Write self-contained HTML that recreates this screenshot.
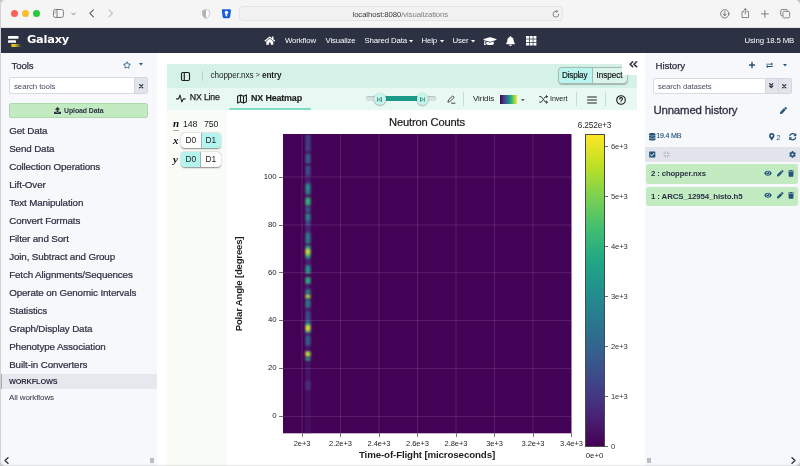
<!DOCTYPE html>
<html lang="en">
<head>
<meta charset="utf-8">
<title>Galaxy</title>
<style>
*{box-sizing:border-box;margin:0;padding:0}
html,body{width:800px;height:466px;overflow:hidden;background:#fff}
body{will-change:transform;font-family:"Liberation Sans",sans-serif;color:#2c3143;position:relative;-webkit-font-smoothing:antialiased}
.abs{position:absolute}
.t{position:absolute;white-space:nowrap;line-height:1}
svg{position:absolute;overflow:visible}
/* browser chrome */
#chrome{left:0;top:0;width:800px;height:28px;background:#f5f5f5;border-bottom:1px solid #e2e2e2}
.dot{width:7.2px;height:7.2px;border-radius:50%;top:9.8px}
#url{left:238.6px;top:6.2px;width:324.4px;height:14.5px;border-radius:4px;background:#f2f2f2;border:1px solid #e3e3e3}
/* navbar */
#nav{left:0;top:28px;width:800px;height:25.4px;background:#2c3143}
#nav .t{color:#fff;font-size:8.6px;top:8.5px}
/* panels */
#left{left:0;top:53px;width:157px;height:413px;background:#f7f8fb}
#right{left:644.5px;top:53px;width:155.5px;height:413px;background:#f7f8fb}
.tool{margin-top:-.8px;left:9.2px;font-size:9.8px;letter-spacing:-.13px;color:#2c3143;-webkit-text-stroke:.22px #2c3143}
.inp{background:#fff;border:1px solid #d6dae3;border-radius:2px}
.yl{font-size:7.8px;color:#262626;letter-spacing:-.12px}
.xl{font-size:7.5px;color:#262626;transform:translateX(-50%);letter-spacing:-.05px}
.ibtn{background:#e1e4ea;border:1px solid #d3d7e0}
</style>
</head>
<body>
<!-- ===== browser chrome ===== -->
<div id="chrome" class="abs"></div>
<div class="abs dot" style="left:10.9px;background:#fe5f57"></div>
<div class="abs dot" style="left:21.7px;background:#febc2e"></div>
<div class="abs dot" style="left:32.6px;background:#28c840"></div>
<svg style="left:53px;top:8.6px" width="11.4" height="9.4" viewBox="0 0 12 10" fill="none" stroke="#7a7a7a" stroke-width="1.05"><rect x=".5" y=".5" width="10.5" height="8.5" rx="2"/><path d="M4.2 .5v8.5"/><path d="M1.8 2.6h1.2M1.8 4.2h1.2" stroke-width=".7"/></svg>
<svg style="left:70.5px;top:12px" width="5" height="4" viewBox="0 0 5 4" fill="none" stroke="#7a7a7a" stroke-width="1"><path d="M.5 .8l2 2 2-2"/></svg>
<svg style="left:88.6px;top:8.9px" width="5.3" height="8.8" viewBox="0 0 6 10" fill="none" stroke="#5a5a5a" stroke-width="1.25" stroke-linecap="round" stroke-linejoin="round"><path d="M5 1L1 5l4 4"/></svg>
<svg style="left:108.2px;top:8.9px" width="5.3" height="8.8" viewBox="0 0 6 10" fill="none" stroke="#bdbdbd" stroke-width="1.25" stroke-linecap="round" stroke-linejoin="round"><path d="M1 1l4 4-4 4"/></svg>
<!-- shield -->
<svg style="left:202px;top:8.8px" width="8" height="10" viewBox="0 0 8 10"><path d="M4 .4C2.800 1.200 1.700 1.500.5 1.600v3.200C.5 7 1.900 8.700 4 9.600 6.100 8.700 7.500 7 7.500 4.800V1.600C6.300 1.500 5.200 1.200 4 .4z" fill="#fcfcfc" stroke="#b4b4b4" stroke-width=".7"/><path d="M4 .4C2.800 1.200 1.700 1.500.5 1.600v3.200C.5 7 1.900 8.700 4 9.600z" fill="#b2b2b2"/></svg>
<!-- bitwarden -->
<svg style="left:220.8px;top:8.8px" width="10.8" height="9.5" viewBox="0 0 10 10"><path d="M1 .2h8c.5 0 .85.4.8.9l-.7 6.400c-.1 1.300-.9 2.200-2.100 2.200H3c-1.200 0-2-.9-2.100-2.200L.2 1.100C.15.600.5.200 1 .2z" fill="#175ddc"/><circle cx="5" cy="3.6" r="1.8" fill="#fff"/><path d="M4.200 4.300h1.600l.2 3.300H4z" fill="#fff"/></svg>
<div id="url" class="abs"></div>
<div class="t" style="left:352.500px;top:10.7px;font-size:7.77px;color:#3c3c3c;letter-spacing:-0.099px">localhost:8080<span style="color:#808080">/visualizations</span></div>
<svg style="left:552px;top:9.500px" width="8" height="8" viewBox="0 0 8 8" fill="none" stroke="#6b6b6b" stroke-width=".8" stroke-linecap="round"><path d="M6.800 4.200A2.900 2.900 0 1 1 4 1.300h1.400"/><path d="M4.500 .2l1.100 1.100-1.100 1.100"/></svg>
<!-- right icons -->
<svg style="left:719.7px;top:8.6px" width="9.6" height="9.6" viewBox="0 0 10 10" fill="none" stroke="#5f5f5f" stroke-width=".85" stroke-linecap="round" stroke-linejoin="round"><circle cx="5" cy="5" r="4.300"/><path d="M5 2.600v4.400M3.200 5.300L5 7.100l1.800-1.800"/></svg>
<svg style="left:740.6px;top:7.6px" width="8.6" height="10.2" viewBox="0 0 9 11" fill="none" stroke="#5f5f5f" stroke-width=".8" stroke-linecap="round" stroke-linejoin="round"><path d="M2.800 4H1v6.300h7V4H6.200"/><path d="M4.500 6.500V.8M2.800 2.400L4.500.7l1.700 1.700"/></svg>
<svg style="left:760.8px;top:9.5px" width="7.8" height="7.8" viewBox="0 0 9 9" fill="none" stroke="#5f5f5f" stroke-width=".9" stroke-linecap="round"><path d="M4.500 .5v8M.5 4.500h8"/></svg>
<svg style="left:780.2px;top:8.8px" width="10.4" height="9.2" viewBox="0 0 11 10" fill="none" stroke="#5f5f5f" stroke-width=".8"><rect x="3" y="2.600" width="7.300" height="7" rx="1.500" fill="#f5f5f5"/><path d="M2.700 7.400h-.6A1.500 1.500 0 0 1 .6 5.900V2A1.500 1.500 0 0 1 2.100.500h4.400A1.500 1.500 0 0 1 8 2v.4"/></svg>

<!-- ===== navbar ===== -->
<div id="nav" class="abs">
  <svg style="left:7.8px;top:7.7px" width="14" height="12" viewBox="0 0 14 12"><defs><linearGradient id="lg" x1="0" x2="1" y1="0" y2="0"><stop offset="0" stop-color="#e8cf1c"/><stop offset=".35" stop-color="#d9c11f"/><stop offset="1" stop-color="#d9c11f" stop-opacity="0"/></linearGradient></defs><rect x="0" y="0" width="10.4" height="2.8" rx=".4" fill="#fff"/><rect x="0" y="4.3" width="8" height="2.5" rx=".4" fill="#fff"/><rect x="3.3" y="7.9" width="9.9" height="3.2" rx=".8" fill="url(#lg)"/></svg>
  <div class="t" style="left:27px;top:6.3px;font-family:'DejaVu Sans','Liberation Sans',sans-serif;font-weight:bold;font-size:11.36px;letter-spacing:-0.21px">Galaxy</div>
  <svg style="left:264.3px;top:8px" width="11.6" height="9.4" viewBox="0 0 576 512" fill="#fff"><path d="M280.400 148.300L96 300.100V464a16 16 0 0 0 16 16l112.100-.3a16 16 0 0 0 15.900-16V368a16 16 0 0 1 16-16h64a16 16 0 0 1 16 16v95.600a16 16 0 0 0 16 16.100L464 480a16 16 0 0 0 16-16V300L295.700 148.300a12.200 12.200 0 0 0-15.300 0zM571.600 251.500L488 182.600V44.100a12 12 0 0 0-12-12h-56a12 12 0 0 0-12 12v72.600L318.500 43a48 48 0 0 0-61 0L4.300 251.500a12 12 0 0 0-1.600 16.900l25.500 31a12 12 0 0 0 16.900 1.600l235.200-193.700a12.200 12.200 0 0 1 15.300 0L530.900 301a12 12 0 0 0 16.900-1.600l25.500-31a12 12 0 0 0-1.700-16.900z"/></svg>
  <div class="t" style="left:285px;font-size:7.8px;letter-spacing:-0.115px">Workflow</div>
  <div class="t" style="left:325.500px;font-size:7.8px;letter-spacing:-0.115px">Visualize</div>
  <div class="t" style="left:364.500px;font-size:7.8px;letter-spacing:-0.115px">Shared Data</div>
  <svg style="left:409.0px;top:11.7px" width="4.2" height="2.500" viewBox="0 0 5 3" fill="#fff"><path d="M0 0h5L2.500 3z"/></svg>
  <div class="t" style="left:421.500px;font-size:7.8px;letter-spacing:-0.115px">Help</div>
  <svg style="left:440.0px;top:11.7px" width="4.2" height="2.500" viewBox="0 0 5 3" fill="#fff"><path d="M0 0h5L2.500 3z"/></svg>
  <div class="t" style="left:452.500px;font-size:7.8px;letter-spacing:-0.115px">User</div>
  <svg style="left:471.0px;top:11.7px" width="4.2" height="2.500" viewBox="0 0 5 3" fill="#fff"><path d="M0 0h5L2.500 3z"/></svg>
  <!-- graduation cap -->
  <svg style="left:483px;top:7.6px" width="14" height="10.4" viewBox="0 0 640 512" fill="#fff"><path d="M622.300 153.200L343.400 67.500c-15.200-4.700-31.600-4.700-46.800 0L17.700 153.200c-23.500 7.200-23.500 38.400 0 45.600l48.600 14.900c-10.700 13.200-17.200 29.300-17.900 46.900C38.800 266.200 32 276.100 32 288c0 10.800 5.700 19.900 13.900 25.700L20.300 428.500c-2.200 10 5.400 19.500 15.600 19.500h56.100c10.200 0 17.800-9.500 15.600-19.500L82.100 313.700C90.300 307.900 96 298.800 96 288c0-11.600-6.500-21.300-15.700-27 .8-15 8.400-28.300 20.700-36.700L296.600 284.500c9.100 2.800 26.400 6.300 46.800 0l278.900-85.700c23.600-7.200 23.600-38.400 0-45.600zM352.800 315.100c-28.500 8.800-52.800 3.900-65.600 0l-145-44.500L128 384c0 35.400 86 64 192 64s192-28.600 192-64l-14.200-113.500-145 44.600z"/></svg>
  <!-- bell -->
  <svg style="left:505.500px;top:8px" width="9" height="10" viewBox="0 0 448 512" fill="#fff"><path d="M224 512c35.300 0 64-28.700 64-64H160c0 35.300 28.700 64 64 64zm215.400-149.700c-19.300-20.800-55.500-52-55.500-154.300 0-77.700-54.500-139.900-127.900-155.200V32c0-17.700-14.300-32-32-32s-32 14.300-32 32v20.800C118.600 68.100 64.100 130.300 64.100 208c0 102.300-36.200 133.500-55.500 154.300-6 6.500-8.700 14.200-8.600 21.700.1 16.400 13 32 32.100 32h383.800c19.100 0 32-15.600 32.100-32 .1-7.500-2.600-15.300-8.600-21.700z"/></svg>
  <!-- grid -->
  <svg style="left:526px;top:8px" width="10.500" height="9.500" viewBox="0 0 10.500 9.500" fill="#fff"><rect x="0" y="0" width="3" height="2.700"/><rect x="3.700" y="0" width="3" height="2.700"/><rect x="7.400" y="0" width="3" height="2.700"/><rect x="0" y="3.400" width="3" height="2.700"/><rect x="3.700" y="3.400" width="3" height="2.700"/><rect x="7.400" y="3.400" width="3" height="2.700"/><rect x="0" y="6.800" width="3" height="2.700"/><rect x="3.700" y="6.800" width="3" height="2.700"/><rect x="7.400" y="6.800" width="3" height="2.700"/></svg>
  <div class="t" style="left:744.500px;font-size:7.8px;letter-spacing:-0.115px">Using 18.5 MB</div>
</div>

<!-- ===== left panel ===== -->
<div id="left" class="abs">
  <div class="t" style="left:11.6px;top:7.8px;font-size:9.71px;font-weight:normal;-webkit-text-stroke:.25px #2c3143;letter-spacing:-0.132px">Tools</div>
  <!-- star -->
  <svg style="left:123px;top:7.6px" width="8" height="8" viewBox="0 0 576 512" fill="#25537b"><path d="M528.100 171.500L382 150.200 316.700 17.800c-11.700-23.600-45.600-23.900-57.400 0L194 150.200 47.900 171.500c-26.200 3.800-36.700 36.100-17.700 54.600l105.700 103-25 145.500c-4.500 26.300 23.200 46 46.400 33.700L288 439.600l130.700 68.700c23.200 12.200 50.900-7.400 46.400-33.700l-25-145.500 105.700-103c19-18.500 8.500-50.800-17.700-54.600zM388.600 312.300l23.700 138.400L288 385.400l-124.300 65.300 23.700-138.400-100.600-98 139-20.200 62.200-126 62.200 126 139 20.200-100.600 98z"/></svg>
  <svg style="left:139.4px;top:10.4px" width="4" height="2.600" viewBox="0 0 5 3" fill="#25537b"><path d="M0 0h5L2.500 3z"/></svg>
  <div class="abs inp" style="left:9px;top:24.4px;width:126px;height:17px;border-radius:2px 0 0 2px"></div>
  <div class="t" style="left:14px;top:29.5px;font-size:7.92px;color:#4a5066;letter-spacing:-0.104px">search tools</div>
  <div class="abs ibtn" style="left:134px;top:24.4px;width:14px;height:17px;border-radius:0 2px 2px 0"></div>
  <svg style="left:138.9px;top:30.7px" width="4.4" height="4.4" viewBox="0 0 5 5" stroke="#2c3143" stroke-width="1.4" stroke-linecap="round"><path d="M.7 .7l3.600 3.600M4.300 .7L.7 4.300"/></svg>
  <div class="abs" style="left:9px;top:50px;width:139px;height:15px;background:#c2ebc2;border:1px solid #b0d8b0;border-radius:2px"></div>
  <svg style="left:54px;top:54px" width="7" height="7" viewBox="0 0 512 512" fill="#2c3143"><path d="M296 384h-80c-13.300 0-24-10.700-24-24V192h-87.700c-17.800 0-26.700-21.500-14.100-34.100L242.300 5.700c7.500-7.500 19.800-7.500 27.300 0l152.200 152.200c12.600 12.600 3.700 34.100-14.100 34.100H320v168c0 13.300-10.700 24-24 24zm216-8v112c0 13.300-10.700 24-24 24H24c-13.300 0-24-10.700-24-24V376c0-13.300 10.700-24 24-24h136v8c0 30.900 25.100 56 56 56h80c30.900 0 56-25.100 56-56v-8h136c13.300 0 24 10.700 24 24z"/></svg>
  <div class="t" style="left:64px;top:55px;font-size:6.96px;font-weight:bold;letter-spacing:-0.107px">Upload Data</div>
  <div class="t tool" style="top:73.500px">Get Data</div>
  <div class="t tool" style="top:91.500px">Send Data</div>
  <div class="t tool" style="top:109.500px">Collection Operations</div>
  <div class="t tool" style="top:127.500px">Lift-Over</div>
  <div class="t tool" style="top:145.500px">Text Manipulation</div>
  <div class="t tool" style="top:163.500px">Convert Formats</div>
  <div class="t tool" style="top:181.500px">Filter and Sort</div>
  <div class="t tool" style="top:199.500px">Join, Subtract and Group</div>
  <div class="t tool" style="top:217.500px">Fetch Alignments/Sequences</div>
  <div class="t tool" style="top:235.500px">Operate on Genomic Intervals</div>
  <div class="t tool" style="top:253.500px">Statistics</div>
  <div class="t tool" style="top:271.500px">Graph/Display Data</div>
  <div class="t tool" style="top:289.500px">Phenotype Association</div>
  <div class="t tool" style="top:307.500px">Built-in Converters</div>
  <div class="abs" style="left:0;top:321px;width:157px;height:15px;background:#e6e8ee;border-left:2.4px solid #a4a8b8"></div>
  <div class="t" style="left:9px;top:325px;font-size:7.38px;font-weight:bold;letter-spacing:-0.162px">WORKFLOWS</div>
  <div class="t" style="left:9px;top:340.500px;font-size:8.03px;letter-spacing:-0.104px">All workflows</div>
  <svg style="left:4px;top:404px" width="5" height="7" viewBox="0 0 5 7" fill="none" stroke="#2c3143" stroke-width="1.400" stroke-linecap="round" stroke-linejoin="round"><path d="M4 .8L1 3.500 4 6.200"/></svg>
  <div class="abs" style="left:149.5px;top:404.5px;width:4px;height:5.4px;background:#bcbec4"></div>
</div>


<!-- ===== center ===== -->
<div id="center" class="abs" style="left:157px;top:53px;width:488px;height:413px;background:#fff"></div>
<div class="abs" style="left:167px;top:63.500px;width:470px;height:24.500px;background:#d5f2e9"></div>
<div class="abs" style="left:167px;top:88px;width:470px;height:21.5px;background:#e8f8f3"></div>
<div class="abs" style="left:167px;top:109.5px;width:60px;height:356.5px;background:#fafcf7"></div>
<!-- white notch + collapse icon -->
<div class="abs" style="left:621.5px;top:60px;width:15.5px;height:15px;background:#fff;border-radius:0 0 0 3px"></div>
<svg style="left:628.5px;top:61.3px" width="8.6" height="6.4" viewBox="0 0 9 7" fill="none" stroke="#2c3143" stroke-width="1.7" stroke-linecap="round" stroke-linejoin="round"><path d="M3.800 .8L1 3.500l2.800 2.700M8 .8L5.200 3.500 8 6.200"/></svg>
<!-- header -->
<svg style="left:181px;top:71.5px" width="9" height="9" viewBox="0 0 9 9" fill="none" stroke="#1e1e1e" stroke-width="1.15"><rect x=".5" y=".5" width="8" height="8" rx="1.200"/><path d="M3.300 .5v8"/></svg>
<div class="abs" style="left:201.500px;top:71px;width:1px;height:9.500px;background:#b9d6cd"></div>
<div class="t" style="left:210.500px;top:71.500px;font-size:8.200px;color:#1e1e1e;letter-spacing:-.1px">chopper.nxs <span style="font-size:7px;position:relative;top:-.5px">&gt;</span> <b>entry</b></div>
<!-- display / inspect -->
<div class="abs" style="left:557.8px;top:67.2px;width:70.4px;height:17px;border:1px solid #a9b9b4;border-radius:4.5px;background:#daf3ec;overflow:hidden;box-shadow:0 .5px 1px rgba(0,0,0,.25)"><div class="abs" style="left:0;top:0;width:34.2px;height:15px;background:#b8f5ee;border-right:1px solid #a8b8b3"></div></div>
<div class="t" style="left:562px;top:72.2px;font-size:8.15px;color:#111;letter-spacing:-.19px;-webkit-text-stroke:.15px #111">Display</div>
<div class="t" style="left:596.500px;top:72.2px;font-size:8.15px;color:#111;letter-spacing:-.045px;-webkit-text-stroke:.15px #111">Inspect</div>
<!-- white notch again over inspect corner -->
<div class="abs" style="left:621.5px;top:60px;width:15.5px;height:15px;background:#fff;border-radius:0 0 0 3px"></div>
<svg style="left:628.5px;top:61.3px" width="8.6" height="6.4" viewBox="0 0 9 7" fill="none" stroke="#2c3143" stroke-width="1.7" stroke-linecap="round" stroke-linejoin="round"><path d="M3.800 .8L1 3.500l2.800 2.700M8 .8L5.200 3.500 8 6.200"/></svg>
<!-- tabs -->
<svg style="left:175.8px;top:93.8px" width="9.6" height="9" viewBox="0 0 10 9" fill="none" stroke="#1e1e1e" stroke-width="1.1" stroke-linecap="round" stroke-linejoin="round"><path d="M.6 4.900h2.100L4.100 .9l2 7.200 1.500-3.200h1.900"/></svg>
<div class="t" style="left:189.8px;top:93.4px;font-size:8.8px;color:#1e1e1e;letter-spacing:-.19px;-webkit-text-stroke:.25px #1e1e1e">NX Line</div>
<svg style="left:237px;top:93.5px" width="10" height="10" viewBox="0 0 10 10" fill="none" stroke="#1e1e1e" stroke-width="1.1" stroke-linejoin="round"><path d="M.6 2.200l2.900-1.300 3 1.300 2.900-1.300v6.900L6.500 9.100l-3-1.300L.6 9.100zM3.500 .9v6.900M6.500 2.200v6.900"/></svg>
<div class="t" style="left:251px;top:93.500px;font-size:8.92px;font-weight:bold;color:#1e1e1e;letter-spacing:-0.153px;-webkit-text-stroke:.15px #1e1e1e">NX Heatmap</div>
<div class="abs" style="left:229px;top:107.500px;width:82px;height:2.200px;background:#7fdcc2;border-radius:1px"></div>
<!-- slider -->
<div class="abs" style="left:366px;top:96.2px;width:70px;height:5px;border-radius:3px;background:#d9e2de;box-shadow:inset 0 .5px 1px rgba(0,0,0,.25)"></div>
<div class="abs" style="left:380px;top:96.2px;width:43px;height:5px;background:#1b9a8a"></div>
<div class="abs" style="left:374px;top:93px;width:11.500px;height:11.500px;border-radius:50%;background:#c4f6ee;box-shadow:0 .5px 1.500px rgba(0,0,0,.45)"></div>
<div class="abs" style="left:416.500px;top:93px;width:11.500px;height:11.500px;border-radius:50%;background:#c4f6ee;box-shadow:0 .5px 1.500px rgba(0,0,0,.45)"></div>
<svg style="left:377px;top:96.500px" width="5" height="5" viewBox="0 0 5 5" fill="none" stroke="#20665c" stroke-width=".7" stroke-linejoin="round"><path d="M.6 .3v4.400"/><path d="M4.500 .5v4L1.700 2.500z"/></svg>
<svg style="left:420px;top:96.500px" width="5" height="5" viewBox="0 0 5 5" fill="none" stroke="#20665c" stroke-width=".7" stroke-linejoin="round"><path d="M4.400 .3v4.400"/><path d="M.5 .5v4L3.300 2.500z"/></svg>
<!-- pencil -->
<svg style="left:446.500px;top:94.500px" width="9" height="9" viewBox="0 0 9 9" fill="none" stroke="#1e1e1e" stroke-width=".8" stroke-linecap="round" stroke-linejoin="round"><path d="M1 6.800l.5-1.900L5.700 .9l1.500 1.500-4.300 4.100z"/><path d="M4.500 8.200H8"/></svg>
<div class="abs" style="left:463px;top:92px;width:1px;height:14px;background:#c5ddd6"></div>
<div class="t" style="left:473px;top:94.500px;font-size:8.02px;color:#1e1e1e;letter-spacing:-0.09px">Viridis</div>
<div class="abs" style="left:500px;top:95px;width:17px;height:9px;background:linear-gradient(90deg,#440154,#414487 25%,#2a788e 45%,#22a884 62%,#7ad151 80%,#fde725)"></div>
<svg style="left:520.7px;top:98.6px" width="3.6" height="2.2" viewBox="0 0 5 3" fill="#555"><path d="M0 0h5L2.500 3z"/></svg>
<!-- invert -->
<svg style="left:539px;top:95px" width="9" height="9" viewBox="0 0 9 9" fill="none" stroke="#1e1e1e" stroke-width=".9" stroke-linecap="round" stroke-linejoin="round"><path d="M.7 1.600h1.500l4.300 5.600h1.800M.7 7.200h1.500l1.300-1.700M5.200 3.200l1.300-1.600h1.800M7.200 .5l1.200 1.100-1.200 1.100M7.200 6.100l1.200 1.100-1.200 1.100"/></svg>
<div class="t" style="left:550px;top:95.500px;font-size:7.17px;color:#1e1e1e;letter-spacing:-0.087px">Invert</div>
<div class="abs" style="left:576px;top:92px;width:1px;height:14px;background:#c5ddd6"></div>
<svg style="left:587px;top:95.500px" width="10" height="8" viewBox="0 0 10 8" fill="none" stroke="#1e1e1e" stroke-width="1" stroke-linecap="round"><path d="M.6 1h8.800M.6 4h8.800M.6 7h8.800"/></svg>
<div class="abs" style="left:605px;top:92px;width:1px;height:14px;background:#c5ddd6"></div>
<svg style="left:615.500px;top:94.500px" width="10" height="10" viewBox="0 0 10 10" fill="none" stroke="#151515" stroke-width="1.1" stroke-linecap="round"><circle cx="5" cy="5" r="4.3"/><path d="M3.700 3.900a1.350 1.350 0 1 1 2 1.200c-.5.300-.7.500-.7 1"/><circle cx="5" cy="7.400" r=".4" fill="#1e1e1e" stroke="none"/></svg>
<!-- dimension mapper -->
<div class="t" style="left:173px;top:117.500px;font-family:'Liberation Serif',serif;font-style:italic;font-weight:bold;font-size:11px;color:#111">n</div>
<div class="abs" style="left:172.5px;top:129.8px;width:6.2px;height:.8px;background:#a8a8a8"></div>
<div class="t" style="left:183px;top:119.500px;font-size:8.8px;color:#1e1e1e;letter-spacing:-0.14px">148</div>
<div class="t" style="left:204px;top:119.500px;font-size:8.8px;color:#1e1e1e;letter-spacing:-0.14px">750</div>
<div class="t" style="left:173px;top:135.2px;font-family:'Liberation Serif',serif;font-style:italic;font-weight:bold;font-size:11px;color:#111">x</div>
<div class="abs" style="left:181px;top:132.500px;width:39.500px;height:15.500px;border-radius:4px;background:#fdfefd;box-shadow:0 .5px 1.500px rgba(0,0,0,.45);overflow:hidden"><div class="abs" style="left:20px;top:0;width:20px;height:16px;background:#b3f4ee;border-left:1px solid #9fb5af"></div></div>
<div class="t" style="left:185.500px;top:136px;font-size:8.4px;color:#1e1e1e;letter-spacing:-0.15px">D0</div>
<div class="t" style="left:205.500px;top:136px;font-size:8.4px;color:#1e1e1e;letter-spacing:-0.15px">D1</div>
<div class="t" style="left:173px;top:153.7px;font-family:'Liberation Serif',serif;font-style:italic;font-weight:bold;font-size:11px;color:#111">y</div>
<div class="abs" style="left:181px;top:151.500px;width:39.500px;height:15.500px;border-radius:4px;background:#fdfefd;box-shadow:0 .5px 1.500px rgba(0,0,0,.45);overflow:hidden"><div class="abs" style="left:0;top:0;width:20px;height:16px;background:#b3f4ee;border-right:1px solid #9fb5af"></div></div>
<div class="t" style="left:185.500px;top:155px;font-size:8.4px;color:#1e1e1e;letter-spacing:-0.15px">D0</div>
<div class="t" style="left:205.500px;top:155px;font-size:8.4px;color:#1e1e1e;letter-spacing:-0.15px">D1</div>
<!-- plot -->
<div class="t" style="left:427px;top:116.7px;font-size:11.18px;color:#151515;transform:translateX(-50%);letter-spacing:-0.163px;-webkit-text-stroke:.18px #151515">Neutron Counts</div>
<svg style="left:283px;top:134px" width="288.500" height="299.300" viewBox="0 0 288.500 299.300">
<defs><clipPath id="cp"><rect width="288.5" height="299.3"/></clipPath><filter id="bl" x="-50%" y="-2%" width="200%" height="104%"><feGaussianBlur stdDeviation="0.8 1.0"/></filter></defs>
<rect width="288.500" height="299.300" fill="#440256"/>
<g clip-path="url(#cp)"><g filter="url(#bl)">
<rect x="22" y="0" width="6.2" height="299.3" fill="#46075b" />
<rect x="22.7" y="0.0" width="2.5" height="1.15" fill="#450d5f"/>
<rect x="25.1" y="0.0" width="2.3" height="1.15" fill="#450c5e"/>
<rect x="22.7" y="1.0" width="2.5" height="1.15" fill="#414386"/>
<rect x="25.1" y="1.0" width="2.3" height="1.15" fill="#423f84"/>
<rect x="22.7" y="2.0" width="2.5" height="1.15" fill="#414587"/>
<rect x="25.1" y="2.0" width="2.3" height="1.15" fill="#433a81"/>
<rect x="22.7" y="3.0" width="2.5" height="1.15" fill="#423f84"/>
<rect x="25.1" y="3.0" width="2.3" height="1.15" fill="#424185"/>
<rect x="22.7" y="4.0" width="2.5" height="1.15" fill="#424286"/>
<rect x="25.1" y="4.0" width="2.3" height="1.15" fill="#433b82"/>
<rect x="22.7" y="5.0" width="2.5" height="1.15" fill="#3f4888"/>
<rect x="25.1" y="5.0" width="2.3" height="1.15" fill="#423d83"/>
<rect x="22.7" y="6.0" width="2.5" height="1.15" fill="#404788"/>
<rect x="25.1" y="6.0" width="2.3" height="1.15" fill="#423d83"/>
<rect x="22.7" y="7.0" width="2.5" height="1.15" fill="#404587"/>
<rect x="25.1" y="7.0" width="2.3" height="1.15" fill="#433a82"/>
<rect x="22.7" y="8.0" width="2.5" height="1.15" fill="#404587"/>
<rect x="25.1" y="8.0" width="2.3" height="1.15" fill="#424185"/>
<rect x="22.7" y="9.0" width="2.5" height="1.15" fill="#414487"/>
<rect x="25.1" y="9.0" width="2.3" height="1.15" fill="#424085"/>
<rect x="22.7" y="10.0" width="2.5" height="1.15" fill="#404587"/>
<rect x="25.1" y="10.0" width="2.3" height="1.15" fill="#433a81"/>
<rect x="22.7" y="11.0" width="2.5" height="1.15" fill="#404687"/>
<rect x="25.1" y="11.0" width="2.3" height="1.15" fill="#423e84"/>
<rect x="22.7" y="12.0" width="2.5" height="1.15" fill="#414286"/>
<rect x="25.1" y="12.0" width="2.3" height="1.15" fill="#433981"/>
<rect x="22.7" y="13.0" width="2.5" height="1.15" fill="#404788"/>
<rect x="25.1" y="13.0" width="2.3" height="1.15" fill="#423d83"/>
<rect x="22.7" y="14.0" width="2.5" height="1.15" fill="#404687"/>
<rect x="25.1" y="14.0" width="2.3" height="1.15" fill="#424185"/>
<rect x="22.7" y="15.0" width="2.5" height="1.15" fill="#404687"/>
<rect x="25.1" y="15.0" width="2.3" height="1.15" fill="#424186"/>
<rect x="22.7" y="16.0" width="2.5" height="1.15" fill="#414386"/>
<rect x="25.1" y="16.0" width="2.3" height="1.15" fill="#424085"/>
<rect x="22.7" y="17.0" width="2.5" height="1.15" fill="#450d5f"/>
<rect x="25.1" y="17.0" width="2.3" height="1.15" fill="#450d5f"/>
<rect x="22.7" y="18.0" width="2.5" height="1.15" fill="#450e60"/>
<rect x="25.1" y="18.0" width="2.3" height="1.15" fill="#450b5e"/>
<rect x="22.7" y="19.0" width="2.5" height="1.15" fill="#450d5f"/>
<rect x="25.1" y="19.0" width="2.3" height="1.15" fill="#450c5e"/>
<rect x="22.7" y="20.0" width="2.5" height="1.15" fill="#33658d"/>
<rect x="25.1" y="20.0" width="2.3" height="1.15" fill="#39568b"/>
<rect x="22.7" y="21.0" width="2.5" height="1.15" fill="#34618d"/>
<rect x="25.1" y="21.0" width="2.3" height="1.15" fill="#3a558b"/>
<rect x="22.7" y="22.0" width="2.5" height="1.15" fill="#355f8d"/>
<rect x="25.1" y="22.0" width="2.3" height="1.15" fill="#39568b"/>
<rect x="22.7" y="23.0" width="2.5" height="1.15" fill="#365d8d"/>
<rect x="25.1" y="23.0" width="2.3" height="1.15" fill="#38588b"/>
<rect x="22.7" y="24.0" width="2.5" height="1.15" fill="#35608d"/>
<rect x="25.1" y="24.0" width="2.3" height="1.15" fill="#375c8c"/>
<rect x="22.7" y="25.0" width="2.5" height="1.15" fill="#34618d"/>
<rect x="25.1" y="25.0" width="2.3" height="1.15" fill="#365c8c"/>
<rect x="22.7" y="26.0" width="2.5" height="1.15" fill="#33638d"/>
<rect x="25.1" y="26.0" width="2.3" height="1.15" fill="#365d8c"/>
<rect x="22.7" y="27.0" width="2.5" height="1.15" fill="#34618d"/>
<rect x="25.1" y="27.0" width="2.3" height="1.15" fill="#3a538a"/>
<rect x="22.7" y="28.0" width="2.5" height="1.15" fill="#33638d"/>
<rect x="25.1" y="28.0" width="2.3" height="1.15" fill="#365c8c"/>
<rect x="22.7" y="29.0" width="2.5" height="1.15" fill="#450e60"/>
<rect x="25.1" y="29.0" width="2.3" height="1.15" fill="#450c5f"/>
<rect x="22.7" y="30.0" width="2.5" height="1.15" fill="#450e60"/>
<rect x="25.1" y="30.0" width="2.3" height="1.15" fill="#450c5e"/>
<rect x="22.7" y="31.0" width="2.5" height="1.15" fill="#450e60"/>
<rect x="25.1" y="31.0" width="2.3" height="1.15" fill="#450c5f"/>
<rect x="22.7" y="32.0" width="2.5" height="1.15" fill="#3c4f89"/>
<rect x="25.1" y="32.0" width="2.3" height="1.15" fill="#404788"/>
<rect x="22.7" y="33.0" width="2.5" height="1.15" fill="#39558b"/>
<rect x="25.1" y="33.0" width="2.3" height="1.15" fill="#3c508a"/>
<rect x="22.7" y="34.0" width="2.5" height="1.15" fill="#3d4d89"/>
<rect x="25.1" y="34.0" width="2.3" height="1.15" fill="#3d4e89"/>
<rect x="22.7" y="35.0" width="2.5" height="1.15" fill="#3b518a"/>
<rect x="25.1" y="35.0" width="2.3" height="1.15" fill="#404788"/>
<rect x="22.7" y="36.0" width="2.5" height="1.15" fill="#3c4f8a"/>
<rect x="25.1" y="36.0" width="2.3" height="1.15" fill="#3d4d89"/>
<rect x="22.7" y="37.0" width="2.5" height="1.15" fill="#39568b"/>
<rect x="25.1" y="37.0" width="2.3" height="1.15" fill="#404688"/>
<rect x="22.7" y="38.0" width="2.5" height="1.15" fill="#3a538a"/>
<rect x="25.1" y="38.0" width="2.3" height="1.15" fill="#404688"/>
<rect x="22.7" y="39.0" width="2.5" height="1.15" fill="#3a548b"/>
<rect x="25.1" y="39.0" width="2.3" height="1.15" fill="#3f4988"/>
<rect x="22.7" y="40.0" width="2.5" height="1.15" fill="#39568b"/>
<rect x="25.1" y="40.0" width="2.3" height="1.15" fill="#3c4f8a"/>
<rect x="22.7" y="41.0" width="2.5" height="1.15" fill="#482475"/>
<rect x="25.1" y="41.0" width="2.3" height="1.15" fill="#482374"/>
<rect x="22.7" y="42.0" width="2.5" height="1.15" fill="#482374"/>
<rect x="25.1" y="42.0" width="2.3" height="1.15" fill="#471e70"/>
<rect x="22.7" y="43.0" width="2.5" height="1.15" fill="#482575"/>
<rect x="25.1" y="43.0" width="2.3" height="1.15" fill="#471e6f"/>
<rect x="22.7" y="44.0" width="2.5" height="1.15" fill="#482273"/>
<rect x="25.1" y="44.0" width="2.3" height="1.15" fill="#482071"/>
<rect x="22.7" y="45.0" width="2.5" height="1.15" fill="#482575"/>
<rect x="25.1" y="45.0" width="2.3" height="1.15" fill="#471f70"/>
<rect x="22.7" y="46.0" width="2.5" height="1.15" fill="#482173"/>
<rect x="25.1" y="46.0" width="2.3" height="1.15" fill="#482273"/>
<rect x="22.7" y="47.0" width="2.5" height="1.15" fill="#482374"/>
<rect x="25.1" y="47.0" width="2.3" height="1.15" fill="#482374"/>
<rect x="22.7" y="48.0" width="2.5" height="1.15" fill="#472676"/>
<rect x="25.1" y="48.0" width="2.3" height="1.15" fill="#482072"/>
<rect x="22.7" y="49.0" width="2.5" height="1.15" fill="#482576"/>
<rect x="25.1" y="49.0" width="2.3" height="1.15" fill="#482273"/>
<rect x="22.7" y="50.0" width="2.5" height="1.15" fill="#228f8d"/>
<rect x="25.1" y="50.0" width="2.3" height="1.15" fill="#26828e"/>
<rect x="22.7" y="51.0" width="2.5" height="1.15" fill="#21918d"/>
<rect x="25.1" y="51.0" width="2.3" height="1.15" fill="#25868d"/>
<rect x="22.7" y="52.0" width="2.5" height="1.15" fill="#229c88"/>
<rect x="25.1" y="52.0" width="2.3" height="1.15" fill="#24878d"/>
<rect x="22.7" y="53.0" width="2.5" height="1.15" fill="#21958b"/>
<rect x="25.1" y="53.0" width="2.3" height="1.15" fill="#228e8d"/>
<rect x="22.7" y="54.0" width="2.5" height="1.15" fill="#21918c"/>
<rect x="25.1" y="54.0" width="2.3" height="1.15" fill="#25868d"/>
<rect x="22.7" y="55.0" width="2.5" height="1.15" fill="#229d88"/>
<rect x="25.1" y="55.0" width="2.3" height="1.15" fill="#24888d"/>
<rect x="22.7" y="56.0" width="2.5" height="1.15" fill="#21908d"/>
<rect x="25.1" y="56.0" width="2.3" height="1.15" fill="#297b8e"/>
<rect x="22.7" y="57.0" width="2.5" height="1.15" fill="#238a8d"/>
<rect x="25.1" y="57.0" width="2.3" height="1.15" fill="#26828e"/>
<rect x="22.7" y="58.0" width="2.5" height="1.15" fill="#27818e"/>
<rect x="25.1" y="58.0" width="2.3" height="1.15" fill="#27808e"/>
<rect x="22.7" y="59.0" width="2.5" height="1.15" fill="#238c8d"/>
<rect x="25.1" y="59.0" width="2.3" height="1.15" fill="#2b778e"/>
<rect x="22.7" y="60.0" width="2.5" height="1.15" fill="#450e60"/>
<rect x="25.1" y="60.0" width="2.3" height="1.15" fill="#450c5e"/>
<rect x="22.7" y="61.0" width="2.5" height="1.15" fill="#450e60"/>
<rect x="25.1" y="61.0" width="2.3" height="1.15" fill="#450c5e"/>
<rect x="22.7" y="62.0" width="2.5" height="1.15" fill="#450e60"/>
<rect x="25.1" y="62.0" width="2.3" height="1.15" fill="#450d5f"/>
<rect x="22.7" y="63.0" width="2.5" height="1.15" fill="#450d60"/>
<rect x="25.1" y="63.0" width="2.3" height="1.15" fill="#450c5e"/>
<rect x="22.7" y="64.0" width="2.5" height="1.15" fill="#32b37a"/>
<rect x="25.1" y="64.0" width="2.3" height="1.15" fill="#26ab82"/>
<rect x="22.7" y="65.0" width="2.5" height="1.15" fill="#2db07d"/>
<rect x="25.1" y="65.0" width="2.3" height="1.15" fill="#22a685"/>
<rect x="22.7" y="66.0" width="2.5" height="1.15" fill="#48c06e"/>
<rect x="25.1" y="66.0" width="2.3" height="1.15" fill="#26ab82"/>
<rect x="22.7" y="67.0" width="2.5" height="1.15" fill="#44bf70"/>
<rect x="25.1" y="67.0" width="2.3" height="1.15" fill="#2bae7f"/>
<rect x="22.7" y="68.0" width="2.5" height="1.15" fill="#3dbb74"/>
<rect x="25.1" y="68.0" width="2.3" height="1.15" fill="#2fb17c"/>
<rect x="22.7" y="69.0" width="2.5" height="1.15" fill="#2fb17c"/>
<rect x="25.1" y="69.0" width="2.3" height="1.15" fill="#22a486"/>
<rect x="22.7" y="70.0" width="2.5" height="1.15" fill="#36b578"/>
<rect x="25.1" y="70.0" width="2.3" height="1.15" fill="#21968b"/>
<rect x="22.7" y="71.0" width="2.5" height="1.15" fill="#460e61"/>
<rect x="25.1" y="71.0" width="2.3" height="1.15" fill="#450d60"/>
<rect x="22.7" y="72.0" width="2.5" height="1.15" fill="#450d5f"/>
<rect x="25.1" y="72.0" width="2.3" height="1.15" fill="#450c5e"/>
<rect x="22.7" y="73.0" width="2.5" height="1.15" fill="#33638d"/>
<rect x="25.1" y="73.0" width="2.3" height="1.15" fill="#3a548b"/>
<rect x="22.7" y="74.0" width="2.5" height="1.15" fill="#375b8c"/>
<rect x="25.1" y="74.0" width="2.3" height="1.15" fill="#39568b"/>
<rect x="22.7" y="75.0" width="2.5" height="1.15" fill="#34618d"/>
<rect x="25.1" y="75.0" width="2.3" height="1.15" fill="#3b528a"/>
<rect x="22.7" y="76.0" width="2.5" height="1.15" fill="#365d8c"/>
<rect x="25.1" y="76.0" width="2.3" height="1.15" fill="#39558b"/>
<rect x="22.7" y="77.0" width="2.5" height="1.15" fill="#33638d"/>
<rect x="25.1" y="77.0" width="2.3" height="1.15" fill="#39568b"/>
<rect x="22.7" y="78.0" width="2.5" height="1.15" fill="#450e60"/>
<rect x="25.1" y="78.0" width="2.3" height="1.15" fill="#450b5e"/>
<rect x="22.7" y="79.0" width="2.5" height="1.15" fill="#450d5f"/>
<rect x="25.1" y="79.0" width="2.3" height="1.15" fill="#450c5f"/>
<rect x="22.7" y="80.0" width="2.5" height="1.15" fill="#21908d"/>
<rect x="25.1" y="80.0" width="2.3" height="1.15" fill="#287d8e"/>
<rect x="22.7" y="81.0" width="2.5" height="1.15" fill="#26848e"/>
<rect x="25.1" y="81.0" width="2.3" height="1.15" fill="#2a778e"/>
<rect x="22.7" y="82.0" width="2.5" height="1.15" fill="#23898d"/>
<rect x="25.1" y="82.0" width="2.3" height="1.15" fill="#2a788e"/>
<rect x="22.7" y="83.0" width="2.5" height="1.15" fill="#228e8d"/>
<rect x="25.1" y="83.0" width="2.3" height="1.15" fill="#26838e"/>
<rect x="22.7" y="84.0" width="2.5" height="1.15" fill="#26838e"/>
<rect x="25.1" y="84.0" width="2.3" height="1.15" fill="#297a8e"/>
<rect x="22.7" y="85.0" width="2.5" height="1.15" fill="#228e8d"/>
<rect x="25.1" y="85.0" width="2.3" height="1.15" fill="#27808e"/>
<rect x="22.7" y="86.0" width="2.5" height="1.15" fill="#3a558b"/>
<rect x="25.1" y="86.0" width="2.3" height="1.15" fill="#3f4988"/>
<rect x="22.7" y="87.0" width="2.5" height="1.15" fill="#3d4e89"/>
<rect x="25.1" y="87.0" width="2.3" height="1.15" fill="#3f4988"/>
<rect x="22.7" y="88.0" width="2.5" height="1.15" fill="#3a558b"/>
<rect x="25.1" y="88.0" width="2.3" height="1.15" fill="#3f4988"/>
<rect x="22.7" y="89.0" width="2.5" height="1.15" fill="#3c508a"/>
<rect x="25.1" y="89.0" width="2.3" height="1.15" fill="#3e4a88"/>
<rect x="22.7" y="90.0" width="2.5" height="1.15" fill="#3b518a"/>
<rect x="25.1" y="90.0" width="2.3" height="1.15" fill="#3e4a88"/>
<rect x="22.7" y="91.0" width="2.5" height="1.15" fill="#45307c"/>
<rect x="25.1" y="91.0" width="2.3" height="1.15" fill="#472777"/>
<rect x="22.7" y="92.0" width="2.5" height="1.15" fill="#472a79"/>
<rect x="25.1" y="92.0" width="2.3" height="1.15" fill="#462c7a"/>
<rect x="22.7" y="93.0" width="2.5" height="1.15" fill="#45307c"/>
<rect x="25.1" y="93.0" width="2.3" height="1.15" fill="#462c7a"/>
<rect x="22.7" y="94.0" width="2.5" height="1.15" fill="#462d7a"/>
<rect x="25.1" y="94.0" width="2.3" height="1.15" fill="#462c7a"/>
<rect x="22.7" y="95.0" width="2.5" height="1.15" fill="#45307c"/>
<rect x="25.1" y="95.0" width="2.3" height="1.15" fill="#472877"/>
<rect x="22.7" y="96.0" width="2.5" height="1.15" fill="#462f7b"/>
<rect x="25.1" y="96.0" width="2.3" height="1.15" fill="#462b79"/>
<rect x="22.7" y="97.0" width="2.5" height="1.15" fill="#462f7b"/>
<rect x="25.1" y="97.0" width="2.3" height="1.15" fill="#472a78"/>
<rect x="22.7" y="98.0" width="2.5" height="1.15" fill="#462c7a"/>
<rect x="25.1" y="98.0" width="2.3" height="1.15" fill="#472878"/>
<rect x="22.7" y="99.0" width="2.5" height="1.15" fill="#297b8e"/>
<rect x="25.1" y="99.0" width="2.3" height="1.15" fill="#2e6e8e"/>
<rect x="22.7" y="100.0" width="2.5" height="1.15" fill="#27818e"/>
<rect x="25.1" y="100.0" width="2.3" height="1.15" fill="#2d718e"/>
<rect x="22.7" y="101.0" width="2.5" height="1.15" fill="#25848d"/>
<rect x="25.1" y="101.0" width="2.3" height="1.15" fill="#2f6e8e"/>
<rect x="22.7" y="102.0" width="2.5" height="1.15" fill="#25868d"/>
<rect x="25.1" y="102.0" width="2.3" height="1.15" fill="#2a788e"/>
<rect x="22.7" y="103.0" width="2.5" height="1.15" fill="#25868d"/>
<rect x="25.1" y="103.0" width="2.3" height="1.15" fill="#297b8e"/>
<rect x="22.7" y="104.0" width="2.5" height="1.15" fill="#25868d"/>
<rect x="25.1" y="104.0" width="2.3" height="1.15" fill="#2b768e"/>
<rect x="22.7" y="105.0" width="2.5" height="1.15" fill="#2a778e"/>
<rect x="25.1" y="105.0" width="2.3" height="1.15" fill="#2a798e"/>
<rect x="22.7" y="106.0" width="2.5" height="1.15" fill="#297a8e"/>
<rect x="25.1" y="106.0" width="2.3" height="1.15" fill="#2d728e"/>
<rect x="22.7" y="107.0" width="2.5" height="1.15" fill="#26828e"/>
<rect x="25.1" y="107.0" width="2.3" height="1.15" fill="#2b758e"/>
<rect x="22.7" y="108.0" width="2.5" height="1.15" fill="#287e8e"/>
<rect x="25.1" y="108.0" width="2.3" height="1.15" fill="#297c8e"/>
<rect x="22.7" y="109.0" width="2.5" height="1.15" fill="#460e61"/>
<rect x="25.1" y="109.0" width="2.3" height="1.15" fill="#450c5f"/>
<rect x="22.7" y="110.0" width="2.5" height="1.15" fill="#460f62"/>
<rect x="25.1" y="110.0" width="2.3" height="1.15" fill="#460f61"/>
<rect x="22.7" y="111.0" width="2.5" height="1.15" fill="#461567"/>
<rect x="25.1" y="111.0" width="2.3" height="1.15" fill="#461466"/>
<rect x="22.7" y="112.0" width="2.5" height="1.15" fill="#219a89"/>
<rect x="25.1" y="112.0" width="2.3" height="1.15" fill="#238a8d"/>
<rect x="22.7" y="113.0" width="2.5" height="1.15" fill="#27ab81"/>
<rect x="25.1" y="113.0" width="2.3" height="1.15" fill="#22a386"/>
<rect x="22.7" y="114.0" width="2.5" height="1.15" fill="#37b678"/>
<rect x="25.1" y="114.0" width="2.3" height="1.15" fill="#36b578"/>
<rect x="22.7" y="115.0" width="2.5" height="1.15" fill="#a9db33"/>
<rect x="25.1" y="115.0" width="2.3" height="1.15" fill="#69cb5b"/>
<rect x="22.7" y="116.0" width="2.5" height="1.15" fill="#ebe525"/>
<rect x="25.1" y="116.0" width="2.3" height="1.15" fill="#67ca5c"/>
<rect x="22.7" y="117.0" width="2.5" height="1.15" fill="#fde725"/>
<rect x="25.1" y="117.0" width="2.3" height="1.15" fill="#d9e226"/>
<rect x="22.7" y="118.0" width="2.5" height="1.15" fill="#c9e126"/>
<rect x="25.1" y="118.0" width="2.3" height="1.15" fill="#a2d938"/>
<rect x="22.7" y="119.0" width="2.5" height="1.15" fill="#b6dd2b"/>
<rect x="25.1" y="119.0" width="2.3" height="1.15" fill="#91d642"/>
<rect x="22.7" y="120.0" width="2.5" height="1.15" fill="#7dd24f"/>
<rect x="25.1" y="120.0" width="2.3" height="1.15" fill="#53c467"/>
<rect x="22.7" y="121.0" width="2.5" height="1.15" fill="#55c466"/>
<rect x="25.1" y="121.0" width="2.3" height="1.15" fill="#22a486"/>
<rect x="22.7" y="122.0" width="2.5" height="1.15" fill="#22a087"/>
<rect x="25.1" y="122.0" width="2.3" height="1.15" fill="#21948b"/>
<rect x="22.7" y="123.0" width="2.5" height="1.15" fill="#21958b"/>
<rect x="25.1" y="123.0" width="2.3" height="1.15" fill="#24878d"/>
<rect x="22.7" y="124.0" width="2.5" height="1.15" fill="#44357e"/>
<rect x="25.1" y="124.0" width="2.3" height="1.15" fill="#462f7b"/>
<rect x="22.7" y="125.0" width="2.5" height="1.15" fill="#472a78"/>
<rect x="25.1" y="125.0" width="2.3" height="1.15" fill="#472978"/>
<rect x="22.7" y="126.0" width="2.5" height="1.15" fill="#472a78"/>
<rect x="25.1" y="126.0" width="2.3" height="1.15" fill="#482676"/>
<rect x="22.7" y="127.0" width="2.5" height="1.15" fill="#472a78"/>
<rect x="25.1" y="127.0" width="2.3" height="1.15" fill="#472877"/>
<rect x="22.7" y="128.0" width="2.5" height="1.15" fill="#462b79"/>
<rect x="25.1" y="128.0" width="2.3" height="1.15" fill="#482676"/>
<rect x="22.7" y="129.0" width="2.5" height="1.15" fill="#472978"/>
<rect x="25.1" y="129.0" width="2.3" height="1.15" fill="#482676"/>
<rect x="22.7" y="130.0" width="2.5" height="1.15" fill="#472877"/>
<rect x="25.1" y="130.0" width="2.3" height="1.15" fill="#472777"/>
<rect x="22.7" y="131.0" width="2.5" height="1.15" fill="#462c79"/>
<rect x="25.1" y="131.0" width="2.3" height="1.15" fill="#482676"/>
<rect x="22.7" y="132.0" width="2.5" height="1.15" fill="#21938c"/>
<rect x="25.1" y="132.0" width="2.3" height="1.15" fill="#24898d"/>
<rect x="22.7" y="133.0" width="2.5" height="1.15" fill="#21998a"/>
<rect x="25.1" y="133.0" width="2.3" height="1.15" fill="#21918d"/>
<rect x="22.7" y="134.0" width="2.5" height="1.15" fill="#22a286"/>
<rect x="25.1" y="134.0" width="2.3" height="1.15" fill="#228d8d"/>
<rect x="22.7" y="135.0" width="2.5" height="1.15" fill="#22a286"/>
<rect x="25.1" y="135.0" width="2.3" height="1.15" fill="#21918d"/>
<rect x="22.7" y="136.0" width="2.5" height="1.15" fill="#219b89"/>
<rect x="25.1" y="136.0" width="2.3" height="1.15" fill="#228c8d"/>
<rect x="22.7" y="137.0" width="2.5" height="1.15" fill="#219c89"/>
<rect x="25.1" y="137.0" width="2.3" height="1.15" fill="#21938c"/>
<rect x="22.7" y="138.0" width="2.5" height="1.15" fill="#219a89"/>
<rect x="25.1" y="138.0" width="2.3" height="1.15" fill="#21928c"/>
<rect x="22.7" y="139.0" width="2.5" height="1.15" fill="#450d5f"/>
<rect x="25.1" y="139.0" width="2.3" height="1.15" fill="#450c5e"/>
<rect x="22.7" y="140.0" width="2.5" height="1.15" fill="#450d60"/>
<rect x="25.1" y="140.0" width="2.3" height="1.15" fill="#450c5f"/>
<rect x="22.7" y="141.0" width="2.5" height="1.15" fill="#450c5f"/>
<rect x="25.1" y="141.0" width="2.3" height="1.15" fill="#450c5e"/>
<rect x="22.7" y="142.0" width="2.5" height="1.15" fill="#450d5f"/>
<rect x="25.1" y="142.0" width="2.3" height="1.15" fill="#450d5f"/>
<rect x="22.7" y="143.0" width="2.5" height="1.15" fill="#450e60"/>
<rect x="25.1" y="143.0" width="2.3" height="1.15" fill="#450c5e"/>
<rect x="22.7" y="144.0" width="2.5" height="1.15" fill="#3fbc73"/>
<rect x="25.1" y="144.0" width="2.3" height="1.15" fill="#26ab82"/>
<rect x="22.7" y="145.0" width="2.5" height="1.15" fill="#2aae7f"/>
<rect x="25.1" y="145.0" width="2.3" height="1.15" fill="#22a486"/>
<rect x="22.7" y="146.0" width="2.5" height="1.15" fill="#25aa82"/>
<rect x="25.1" y="146.0" width="2.3" height="1.15" fill="#27ab81"/>
<rect x="22.7" y="147.0" width="2.5" height="1.15" fill="#37b777"/>
<rect x="25.1" y="147.0" width="2.3" height="1.15" fill="#29ad80"/>
<rect x="22.7" y="148.0" width="2.5" height="1.15" fill="#3cba75"/>
<rect x="25.1" y="148.0" width="2.3" height="1.15" fill="#22a884"/>
<rect x="22.7" y="149.0" width="2.5" height="1.15" fill="#482576"/>
<rect x="25.1" y="149.0" width="2.3" height="1.15" fill="#482172"/>
<rect x="22.7" y="150.0" width="2.5" height="1.15" fill="#482273"/>
<rect x="25.1" y="150.0" width="2.3" height="1.15" fill="#482172"/>
<rect x="22.7" y="151.0" width="2.5" height="1.15" fill="#482172"/>
<rect x="25.1" y="151.0" width="2.3" height="1.15" fill="#471f70"/>
<rect x="22.7" y="152.0" width="2.5" height="1.15" fill="#482576"/>
<rect x="25.1" y="152.0" width="2.3" height="1.15" fill="#471e70"/>
<rect x="22.7" y="153.0" width="2.5" height="1.15" fill="#482273"/>
<rect x="25.1" y="153.0" width="2.3" height="1.15" fill="#471e70"/>
<rect x="22.7" y="154.0" width="2.5" height="1.15" fill="#482676"/>
<rect x="25.1" y="154.0" width="2.3" height="1.15" fill="#471f70"/>
<rect x="22.7" y="155.0" width="2.5" height="1.15" fill="#482172"/>
<rect x="25.1" y="155.0" width="2.3" height="1.15" fill="#482273"/>
<rect x="22.7" y="156.0" width="2.5" height="1.15" fill="#287d8e"/>
<rect x="25.1" y="156.0" width="2.3" height="1.15" fill="#287f8e"/>
<rect x="22.7" y="157.0" width="2.5" height="1.15" fill="#24878d"/>
<rect x="25.1" y="157.0" width="2.3" height="1.15" fill="#287e8e"/>
<rect x="22.7" y="158.0" width="2.5" height="1.15" fill="#238c8d"/>
<rect x="25.1" y="158.0" width="2.3" height="1.15" fill="#297a8e"/>
<rect x="22.7" y="159.0" width="2.5" height="1.15" fill="#24898d"/>
<rect x="25.1" y="159.0" width="2.3" height="1.15" fill="#2d728e"/>
<rect x="22.7" y="160.0" width="2.5" height="1.15" fill="#450e60"/>
<rect x="25.1" y="160.0" width="2.3" height="1.15" fill="#450c5e"/>
<rect x="22.7" y="161.0" width="2.5" height="1.15" fill="#d1e126"/>
<rect x="25.1" y="161.0" width="2.3" height="1.15" fill="#63c95e"/>
<rect x="22.7" y="162.0" width="2.5" height="1.15" fill="#d4e226"/>
<rect x="25.1" y="162.0" width="2.3" height="1.15" fill="#a6da34"/>
<rect x="22.7" y="163.0" width="2.5" height="1.15" fill="#93d641"/>
<rect x="25.1" y="163.0" width="2.3" height="1.15" fill="#73cf55"/>
<rect x="22.7" y="164.0" width="2.5" height="1.15" fill="#450d60"/>
<rect x="25.1" y="164.0" width="2.3" height="1.15" fill="#450d5f"/>
<rect x="22.7" y="165.0" width="2.5" height="1.15" fill="#450d5f"/>
<rect x="25.1" y="165.0" width="2.3" height="1.15" fill="#450b5e"/>
<rect x="22.7" y="166.0" width="2.5" height="1.15" fill="#2a798e"/>
<rect x="25.1" y="166.0" width="2.3" height="1.15" fill="#2c748e"/>
<rect x="22.7" y="167.0" width="2.5" height="1.15" fill="#27818e"/>
<rect x="25.1" y="167.0" width="2.3" height="1.15" fill="#2d718e"/>
<rect x="22.7" y="168.0" width="2.5" height="1.15" fill="#297b8e"/>
<rect x="25.1" y="168.0" width="2.3" height="1.15" fill="#2d718e"/>
<rect x="22.7" y="169.0" width="2.5" height="1.15" fill="#297a8e"/>
<rect x="25.1" y="169.0" width="2.3" height="1.15" fill="#2d718e"/>
<rect x="22.7" y="170.0" width="2.5" height="1.15" fill="#2b768e"/>
<rect x="25.1" y="170.0" width="2.3" height="1.15" fill="#2c738e"/>
<rect x="22.7" y="171.0" width="2.5" height="1.15" fill="#25848d"/>
<rect x="25.1" y="171.0" width="2.3" height="1.15" fill="#2d718e"/>
<rect x="22.7" y="172.0" width="2.5" height="1.15" fill="#27818e"/>
<rect x="25.1" y="172.0" width="2.3" height="1.15" fill="#2f6d8e"/>
<rect x="22.7" y="173.0" width="2.5" height="1.15" fill="#482576"/>
<rect x="25.1" y="173.0" width="2.3" height="1.15" fill="#482273"/>
<rect x="22.7" y="174.0" width="2.5" height="1.15" fill="#482576"/>
<rect x="25.1" y="174.0" width="2.3" height="1.15" fill="#482172"/>
<rect x="22.7" y="175.0" width="2.5" height="1.15" fill="#482475"/>
<rect x="25.1" y="175.0" width="2.3" height="1.15" fill="#482172"/>
<rect x="22.7" y="176.0" width="2.5" height="1.15" fill="#482676"/>
<rect x="25.1" y="176.0" width="2.3" height="1.15" fill="#471f70"/>
<rect x="22.7" y="177.0" width="2.5" height="1.15" fill="#482273"/>
<rect x="25.1" y="177.0" width="2.3" height="1.15" fill="#482273"/>
<rect x="22.7" y="178.0" width="2.5" height="1.15" fill="#38598c"/>
<rect x="25.1" y="178.0" width="2.3" height="1.15" fill="#3d4d89"/>
<rect x="22.7" y="179.0" width="2.5" height="1.15" fill="#3a548a"/>
<rect x="25.1" y="179.0" width="2.3" height="1.15" fill="#3c4f8a"/>
<rect x="22.7" y="180.0" width="2.5" height="1.15" fill="#3b518a"/>
<rect x="25.1" y="180.0" width="2.3" height="1.15" fill="#3e4b89"/>
<rect x="22.7" y="181.0" width="2.5" height="1.15" fill="#3b518a"/>
<rect x="25.1" y="181.0" width="2.3" height="1.15" fill="#3d4e89"/>
<rect x="22.7" y="182.0" width="2.5" height="1.15" fill="#3b528a"/>
<rect x="25.1" y="182.0" width="2.3" height="1.15" fill="#3e4a88"/>
<rect x="22.7" y="183.0" width="2.5" height="1.15" fill="#39568b"/>
<rect x="25.1" y="183.0" width="2.3" height="1.15" fill="#3b528a"/>
<rect x="22.7" y="184.0" width="2.5" height="1.15" fill="#3b528a"/>
<rect x="25.1" y="184.0" width="2.3" height="1.15" fill="#3c4f8a"/>
<rect x="22.7" y="185.0" width="2.5" height="1.15" fill="#3a538a"/>
<rect x="25.1" y="185.0" width="2.3" height="1.15" fill="#3b518a"/>
<rect x="22.7" y="186.0" width="2.5" height="1.15" fill="#39568b"/>
<rect x="25.1" y="186.0" width="2.3" height="1.15" fill="#3e4b89"/>
<rect x="22.7" y="187.0" width="2.5" height="1.15" fill="#3a548a"/>
<rect x="25.1" y="187.0" width="2.3" height="1.15" fill="#3e4b88"/>
<rect x="22.7" y="188.0" width="2.5" height="1.15" fill="#365c8c"/>
<rect x="25.1" y="188.0" width="2.3" height="1.15" fill="#3a548a"/>
<rect x="22.7" y="189.0" width="2.5" height="1.15" fill="#229c88"/>
<rect x="25.1" y="189.0" width="2.3" height="1.15" fill="#21938c"/>
<rect x="22.7" y="190.0" width="2.5" height="1.15" fill="#33b47a"/>
<rect x="25.1" y="190.0" width="2.3" height="1.15" fill="#2caf7e"/>
<rect x="22.7" y="191.0" width="2.5" height="1.15" fill="#63c95e"/>
<rect x="25.1" y="191.0" width="2.3" height="1.15" fill="#6fcd57"/>
<rect x="22.7" y="192.0" width="2.5" height="1.15" fill="#d8e226"/>
<rect x="25.1" y="192.0" width="2.3" height="1.15" fill="#a5da36"/>
<rect x="22.7" y="193.0" width="2.5" height="1.15" fill="#fde725"/>
<rect x="25.1" y="193.0" width="2.3" height="1.15" fill="#f2e625"/>
<rect x="22.7" y="194.0" width="2.5" height="1.15" fill="#fde725"/>
<rect x="25.1" y="194.0" width="2.3" height="1.15" fill="#d8e226"/>
<rect x="22.7" y="195.0" width="2.5" height="1.15" fill="#d8e226"/>
<rect x="25.1" y="195.0" width="2.3" height="1.15" fill="#b0dc2f"/>
<rect x="22.7" y="196.0" width="2.5" height="1.15" fill="#9cd83b"/>
<rect x="25.1" y="196.0" width="2.3" height="1.15" fill="#49c06d"/>
<rect x="22.7" y="197.0" width="2.5" height="1.15" fill="#41be71"/>
<rect x="25.1" y="197.0" width="2.3" height="1.15" fill="#32b37a"/>
<rect x="22.7" y="198.0" width="2.5" height="1.15" fill="#423e83"/>
<rect x="25.1" y="198.0" width="2.3" height="1.15" fill="#44367f"/>
<rect x="22.7" y="199.0" width="2.5" height="1.15" fill="#462c7a"/>
<rect x="25.1" y="199.0" width="2.3" height="1.15" fill="#462b79"/>
<rect x="22.7" y="200.0" width="2.5" height="1.15" fill="#472877"/>
<rect x="25.1" y="200.0" width="2.3" height="1.15" fill="#482676"/>
<rect x="22.7" y="201.0" width="2.5" height="1.15" fill="#472777"/>
<rect x="25.1" y="201.0" width="2.3" height="1.15" fill="#482071"/>
<rect x="22.7" y="202.0" width="2.5" height="1.15" fill="#34608d"/>
<rect x="25.1" y="202.0" width="2.3" height="1.15" fill="#38598c"/>
<rect x="22.7" y="203.0" width="2.5" height="1.15" fill="#35608d"/>
<rect x="25.1" y="203.0" width="2.3" height="1.15" fill="#355e8d"/>
<rect x="22.7" y="204.0" width="2.5" height="1.15" fill="#31698d"/>
<rect x="25.1" y="204.0" width="2.3" height="1.15" fill="#34618d"/>
<rect x="22.7" y="205.0" width="2.5" height="1.15" fill="#34618d"/>
<rect x="25.1" y="205.0" width="2.3" height="1.15" fill="#34608d"/>
<rect x="22.7" y="206.0" width="2.5" height="1.15" fill="#34628d"/>
<rect x="25.1" y="206.0" width="2.3" height="1.15" fill="#375b8c"/>
<rect x="22.7" y="207.0" width="2.5" height="1.15" fill="#32678d"/>
<rect x="25.1" y="207.0" width="2.3" height="1.15" fill="#39578b"/>
<rect x="22.7" y="208.0" width="2.5" height="1.15" fill="#355f8d"/>
<rect x="25.1" y="208.0" width="2.3" height="1.15" fill="#35608d"/>
<rect x="22.7" y="209.0" width="2.5" height="1.15" fill="#34618d"/>
<rect x="25.1" y="209.0" width="2.3" height="1.15" fill="#375a8c"/>
<rect x="22.7" y="210.0" width="2.5" height="1.15" fill="#32658d"/>
<rect x="25.1" y="210.0" width="2.3" height="1.15" fill="#355e8d"/>
<rect x="22.7" y="211.0" width="2.5" height="1.15" fill="#471b6c"/>
<rect x="25.1" y="211.0" width="2.3" height="1.15" fill="#471a6b"/>
<rect x="22.7" y="212.0" width="2.5" height="1.15" fill="#471d6e"/>
<rect x="25.1" y="212.0" width="2.3" height="1.15" fill="#471a6c"/>
<rect x="22.7" y="213.0" width="2.5" height="1.15" fill="#471c6d"/>
<rect x="25.1" y="213.0" width="2.3" height="1.15" fill="#471b6c"/>
<rect x="22.7" y="214.0" width="2.5" height="1.15" fill="#471f70"/>
<rect x="25.1" y="214.0" width="2.3" height="1.15" fill="#471a6b"/>
<rect x="22.7" y="215.0" width="2.5" height="1.15" fill="#471d6f"/>
<rect x="25.1" y="215.0" width="2.3" height="1.15" fill="#47196a"/>
<rect x="22.7" y="216.0" width="2.5" height="1.15" fill="#471c6d"/>
<rect x="25.1" y="216.0" width="2.3" height="1.15" fill="#471b6c"/>
<rect x="22.7" y="217.0" width="2.5" height="1.15" fill="#471b6d"/>
<rect x="25.1" y="217.0" width="2.3" height="1.15" fill="#471c6d"/>
<rect x="22.7" y="218.0" width="2.5" height="1.15" fill="#f0e525"/>
<rect x="25.1" y="218.0" width="2.3" height="1.15" fill="#6ccc59"/>
<rect x="22.7" y="219.0" width="2.5" height="1.15" fill="#f3e625"/>
<rect x="25.1" y="219.0" width="2.3" height="1.15" fill="#82d34c"/>
<rect x="22.7" y="220.0" width="2.5" height="1.15" fill="#e3e425"/>
<rect x="25.1" y="220.0" width="2.3" height="1.15" fill="#a4da36"/>
<rect x="22.7" y="221.0" width="2.5" height="1.15" fill="#b6de2a"/>
<rect x="25.1" y="221.0" width="2.3" height="1.15" fill="#9cd83b"/>
<rect x="22.7" y="222.0" width="2.5" height="1.15" fill="#450e60"/>
<rect x="25.1" y="222.0" width="2.3" height="1.15" fill="#450d5f"/>
<rect x="22.7" y="223.0" width="2.5" height="1.15" fill="#450d5f"/>
<rect x="25.1" y="223.0" width="2.3" height="1.15" fill="#450c5f"/>
<rect x="22.7" y="224.0" width="2.5" height="1.15" fill="#30b27c"/>
<rect x="25.1" y="224.0" width="2.3" height="1.15" fill="#229d88"/>
<rect x="22.7" y="225.0" width="2.5" height="1.15" fill="#23a983"/>
<rect x="25.1" y="225.0" width="2.3" height="1.15" fill="#21928c"/>
<rect x="22.7" y="226.0" width="2.5" height="1.15" fill="#461668"/>
<rect x="25.1" y="226.0" width="2.3" height="1.15" fill="#461365"/>
<rect x="22.7" y="227.0" width="2.5" height="1.15" fill="#461768"/>
<rect x="25.1" y="227.0" width="2.3" height="1.15" fill="#461466"/>
<rect x="22.7" y="228.0" width="2.5" height="1.15" fill="#461668"/>
<rect x="25.1" y="228.0" width="2.3" height="1.15" fill="#461365"/>
<rect x="22.7" y="229.0" width="2.5" height="1.15" fill="#461668"/>
<rect x="25.1" y="229.0" width="2.3" height="1.15" fill="#461466"/>
<rect x="22.7" y="230.0" width="2.5" height="1.15" fill="#461567"/>
<rect x="25.1" y="230.0" width="2.3" height="1.15" fill="#461567"/>
<rect x="22.7" y="231.0" width="2.5" height="1.15" fill="#461768"/>
<rect x="25.1" y="231.0" width="2.3" height="1.15" fill="#461365"/>
<rect x="22.7" y="232.0" width="2.5" height="1.15" fill="#471769"/>
<rect x="25.1" y="232.0" width="2.3" height="1.15" fill="#461365"/>
<rect x="22.7" y="233.0" width="2.5" height="1.15" fill="#461567"/>
<rect x="25.1" y="233.0" width="2.3" height="1.15" fill="#461566"/>
<rect x="22.7" y="234.0" width="2.5" height="1.15" fill="#461668"/>
<rect x="25.1" y="234.0" width="2.3" height="1.15" fill="#461466"/>
<rect x="22.7" y="235.0" width="2.5" height="1.15" fill="#461668"/>
<rect x="25.1" y="235.0" width="2.3" height="1.15" fill="#461466"/>
<rect x="22.7" y="236.0" width="2.5" height="1.15" fill="#461567"/>
<rect x="25.1" y="236.0" width="2.3" height="1.15" fill="#461365"/>
<rect x="22.7" y="237.0" width="2.5" height="1.15" fill="#461566"/>
<rect x="25.1" y="237.0" width="2.3" height="1.15" fill="#461566"/>
<rect x="22.7" y="238.0" width="2.5" height="1.15" fill="#461769"/>
<rect x="25.1" y="238.0" width="2.3" height="1.15" fill="#461466"/>
<rect x="22.7" y="239.0" width="2.5" height="1.15" fill="#461769"/>
<rect x="25.1" y="239.0" width="2.3" height="1.15" fill="#461365"/>
<rect x="22.7" y="240.0" width="2.5" height="1.15" fill="#461567"/>
<rect x="25.1" y="240.0" width="2.3" height="1.15" fill="#461465"/>
<rect x="22.7" y="241.0" width="2.5" height="1.15" fill="#471769"/>
<rect x="25.1" y="241.0" width="2.3" height="1.15" fill="#461365"/>
<rect x="22.7" y="242.0" width="2.5" height="1.15" fill="#461668"/>
<rect x="25.1" y="242.0" width="2.3" height="1.15" fill="#461365"/>
<rect x="22.7" y="243.0" width="2.5" height="1.15" fill="#471769"/>
<rect x="25.1" y="243.0" width="2.3" height="1.15" fill="#461365"/>
<rect x="22.7" y="244.0" width="2.5" height="1.15" fill="#461567"/>
<rect x="25.1" y="244.0" width="2.3" height="1.15" fill="#461466"/>
<rect x="22.7" y="245.0" width="2.5" height="1.15" fill="#461668"/>
<rect x="25.1" y="245.0" width="2.3" height="1.15" fill="#461567"/>
<rect x="22.7" y="246.0" width="2.5" height="1.15" fill="#461667"/>
<rect x="25.1" y="246.0" width="2.3" height="1.15" fill="#461567"/>
<rect x="22.7" y="247.0" width="2.5" height="1.15" fill="#45317c"/>
<rect x="25.1" y="247.0" width="2.3" height="1.15" fill="#462e7a"/>
<rect x="22.7" y="248.0" width="2.5" height="1.15" fill="#45317c"/>
<rect x="25.1" y="248.0" width="2.3" height="1.15" fill="#462d7a"/>
<rect x="22.7" y="249.0" width="2.5" height="1.15" fill="#44367f"/>
<rect x="25.1" y="249.0" width="2.3" height="1.15" fill="#45317c"/>
<rect x="22.7" y="250.0" width="2.5" height="1.15" fill="#45327d"/>
<rect x="25.1" y="250.0" width="2.3" height="1.15" fill="#462d7a"/>
<rect x="22.7" y="251.0" width="2.5" height="1.15" fill="#45337e"/>
<rect x="25.1" y="251.0" width="2.3" height="1.15" fill="#45317c"/>
<rect x="22.7" y="252.0" width="2.5" height="1.15" fill="#44367f"/>
<rect x="25.1" y="252.0" width="2.3" height="1.15" fill="#45317c"/>
<rect x="22.7" y="253.0" width="2.5" height="1.15" fill="#44357e"/>
<rect x="25.1" y="253.0" width="2.3" height="1.15" fill="#462d7a"/>
<rect x="22.7" y="254.0" width="2.5" height="1.15" fill="#45337e"/>
<rect x="25.1" y="254.0" width="2.3" height="1.15" fill="#462d7a"/>
<rect x="22.7" y="255.0" width="2.5" height="1.15" fill="#44347e"/>
<rect x="25.1" y="255.0" width="2.3" height="1.15" fill="#45307c"/>
<rect x="22.7" y="256.0" width="2.5" height="1.15" fill="#461264"/>
<rect x="25.1" y="256.0" width="2.3" height="1.15" fill="#461062"/>
<rect x="22.7" y="257.0" width="2.5" height="1.15" fill="#461365"/>
<rect x="25.1" y="257.0" width="2.3" height="1.15" fill="#461062"/>
<rect x="22.7" y="258.0" width="2.5" height="1.15" fill="#461365"/>
<rect x="25.1" y="258.0" width="2.3" height="1.15" fill="#461264"/>
<rect x="22.7" y="259.0" width="2.5" height="1.15" fill="#461466"/>
<rect x="25.1" y="259.0" width="2.3" height="1.15" fill="#461063"/>
<rect x="22.7" y="260.0" width="2.5" height="1.15" fill="#461365"/>
<rect x="25.1" y="260.0" width="2.3" height="1.15" fill="#461163"/>
<rect x="22.7" y="261.0" width="2.5" height="1.15" fill="#461365"/>
<rect x="25.1" y="261.0" width="2.3" height="1.15" fill="#461264"/>
<rect x="22.7" y="262.0" width="2.5" height="1.15" fill="#461365"/>
<rect x="25.1" y="262.0" width="2.3" height="1.15" fill="#461062"/>
<rect x="22.7" y="263.0" width="2.5" height="1.15" fill="#461465"/>
<rect x="25.1" y="263.0" width="2.3" height="1.15" fill="#461163"/>
<rect x="22.7" y="264.0" width="2.5" height="1.15" fill="#461365"/>
<rect x="25.1" y="264.0" width="2.3" height="1.15" fill="#461163"/>
<rect x="22.7" y="265.0" width="2.5" height="1.15" fill="#461163"/>
<rect x="25.1" y="265.0" width="2.3" height="1.15" fill="#461163"/>
<rect x="22.7" y="266.0" width="2.5" height="1.15" fill="#461365"/>
<rect x="25.1" y="266.0" width="2.3" height="1.15" fill="#461163"/>
<rect x="22.7" y="267.0" width="2.5" height="1.15" fill="#461365"/>
<rect x="25.1" y="267.0" width="2.3" height="1.15" fill="#461163"/>
<rect x="22.7" y="268.0" width="2.5" height="1.15" fill="#461264"/>
<rect x="25.1" y="268.0" width="2.3" height="1.15" fill="#461163"/>
<rect x="22.7" y="269.0" width="2.5" height="1.15" fill="#461163"/>
<rect x="25.1" y="269.0" width="2.3" height="1.15" fill="#461163"/>
<rect x="22.7" y="270.0" width="2.5" height="1.15" fill="#461365"/>
<rect x="25.1" y="270.0" width="2.3" height="1.15" fill="#461163"/>
<rect x="22.7" y="271.0" width="2.5" height="1.15" fill="#461365"/>
<rect x="25.1" y="271.0" width="2.3" height="1.15" fill="#461264"/>
<rect x="22.7" y="272.0" width="2.5" height="1.15" fill="#461466"/>
<rect x="25.1" y="272.0" width="2.3" height="1.15" fill="#461062"/>
<rect x="22.7" y="273.0" width="2.5" height="1.15" fill="#461365"/>
<rect x="25.1" y="273.0" width="2.3" height="1.15" fill="#461163"/>
<rect x="22.7" y="274.0" width="2.5" height="1.15" fill="#461163"/>
<rect x="25.1" y="274.0" width="2.3" height="1.15" fill="#461063"/>
<rect x="22.7" y="275.0" width="2.5" height="1.15" fill="#461264"/>
<rect x="25.1" y="275.0" width="2.3" height="1.15" fill="#461062"/>
<rect x="22.7" y="276.0" width="2.5" height="1.15" fill="#450d60"/>
<rect x="25.1" y="276.0" width="2.3" height="1.15" fill="#450d5f"/>
<rect x="22.7" y="277.0" width="2.5" height="1.15" fill="#450d5f"/>
<rect x="25.1" y="277.0" width="2.3" height="1.15" fill="#450d5f"/>
<rect x="22.7" y="278.0" width="2.5" height="1.15" fill="#450e60"/>
<rect x="25.1" y="278.0" width="2.3" height="1.15" fill="#450b5e"/>
<rect x="22.7" y="279.0" width="2.5" height="1.15" fill="#450e60"/>
<rect x="25.1" y="279.0" width="2.3" height="1.15" fill="#450c5f"/>
<rect x="22.7" y="280.0" width="2.5" height="1.15" fill="#450e60"/>
<rect x="25.1" y="280.0" width="2.3" height="1.15" fill="#450c5f"/>
<rect x="22.7" y="281.0" width="2.5" height="1.15" fill="#450e60"/>
<rect x="25.1" y="281.0" width="2.3" height="1.15" fill="#450c5e"/>
<rect x="22.7" y="282.0" width="2.5" height="1.15" fill="#450e60"/>
<rect x="25.1" y="282.0" width="2.3" height="1.15" fill="#450d5f"/>
<rect x="22.7" y="283.0" width="2.5" height="1.15" fill="#450e60"/>
<rect x="25.1" y="283.0" width="2.3" height="1.15" fill="#450c5e"/>
<rect x="22.7" y="284.0" width="2.5" height="1.15" fill="#450e60"/>
<rect x="25.1" y="284.0" width="2.3" height="1.15" fill="#450c5e"/>
<rect x="22.7" y="285.0" width="2.5" height="1.15" fill="#450c5f"/>
<rect x="25.1" y="285.0" width="2.3" height="1.15" fill="#450b5e"/>
<rect x="22.7" y="286.0" width="2.5" height="1.15" fill="#450c5f"/>
<rect x="25.1" y="286.0" width="2.3" height="1.15" fill="#450b5e"/>
<rect x="22.7" y="287.0" width="2.5" height="1.15" fill="#450d5f"/>
<rect x="25.1" y="287.0" width="2.3" height="1.15" fill="#450c5e"/>
<rect x="22.7" y="288.0" width="2.5" height="1.15" fill="#450e60"/>
<rect x="25.1" y="288.0" width="2.3" height="1.15" fill="#450c5e"/>
<rect x="22.7" y="289.0" width="2.5" height="1.15" fill="#450d5f"/>
<rect x="25.1" y="289.0" width="2.3" height="1.15" fill="#450c5f"/>
<rect x="22.7" y="290.0" width="2.5" height="1.15" fill="#450d5f"/>
<rect x="25.1" y="290.0" width="2.3" height="1.15" fill="#450c5e"/>
<rect x="22.7" y="291.0" width="2.5" height="1.15" fill="#450e60"/>
<rect x="25.1" y="291.0" width="2.3" height="1.15" fill="#450c5e"/>
<rect x="22.7" y="292.0" width="2.5" height="1.15" fill="#450d5f"/>
<rect x="25.1" y="292.0" width="2.3" height="1.15" fill="#450d5f"/>
<rect x="22.7" y="293.0" width="2.5" height="1.15" fill="#450e60"/>
<rect x="25.1" y="293.0" width="2.3" height="1.15" fill="#450c5e"/>
<rect x="22.7" y="294.0" width="2.5" height="1.15" fill="#450d5f"/>
<rect x="25.1" y="294.0" width="2.3" height="1.15" fill="#450c5e"/>
<rect x="22.7" y="295.0" width="2.5" height="1.15" fill="#450d60"/>
<rect x="25.1" y="295.0" width="2.3" height="1.15" fill="#450c5e"/>
<rect x="22.7" y="296.0" width="2.5" height="1.15" fill="#450c5f"/>
<rect x="25.1" y="296.0" width="2.3" height="1.15" fill="#450c5e"/>
<rect x="22.7" y="297.0" width="2.5" height="1.15" fill="#450e60"/>
<rect x="25.1" y="297.0" width="2.3" height="1.15" fill="#450b5e"/>
<rect x="22.7" y="298.0" width="2.5" height="1.15" fill="#450d5f"/>
<rect x="25.1" y="298.0" width="2.3" height="1.15" fill="#450b5e"/>
<rect x="22.7" y="299.0" width="2.5" height="1.15" fill="#450d5f"/>
<rect x="25.1" y="299.0" width="2.3" height="1.15" fill="#450b5e"/>
</g></g>
<g stroke="#ffffff" stroke-opacity=".17" stroke-width=".7" fill="none"><path d="M19.0 0V299.3" /><path d="M57.5 0V299.3" /><path d="M96.0 0V299.3" /><path d="M134.5 0V299.3" /><path d="M173.0 0V299.3" /><path d="M211.5 0V299.3" /><path d="M250.0 0V299.3" /><path d="M0 43.0H288.5" /><path d="M0 91.0H288.5" /><path d="M0 138.7H288.5" /><path d="M0 186.6H288.5" /><path d="M0 234.4H288.5" /><path d="M0 282.4H288.5" /></g>
</svg>
<div class="abs" style="left:279px;top:176.6px;width:4px;height:.8px;background:#777"></div>
<div class="t yl" style="right:523.5px;top:172.8px">100</div>
<div class="abs" style="left:279px;top:224.6px;width:4px;height:.8px;background:#777"></div>
<div class="t yl" style="right:523.5px;top:220.8px">80</div>
<div class="abs" style="left:279px;top:272.3px;width:4px;height:.8px;background:#777"></div>
<div class="t yl" style="right:523.5px;top:268.5px">60</div>
<div class="abs" style="left:279px;top:320.2px;width:4px;height:.8px;background:#777"></div>
<div class="t yl" style="right:523.5px;top:316.4px">40</div>
<div class="abs" style="left:279px;top:368.0px;width:4px;height:.8px;background:#777"></div>
<div class="t yl" style="right:523.5px;top:364.2px">20</div>
<div class="abs" style="left:279px;top:416.0px;width:4px;height:.8px;background:#777"></div>
<div class="t yl" style="right:523.5px;top:412.2px">0</div>
<div class="abs" style="left:301.6px;top:433.300px;width:.8px;height:3.500px;background:#777"></div>
<div class="t xl" style="left:302.0px;top:440px">2e+3</div>
<div class="abs" style="left:340.1px;top:433.300px;width:.8px;height:3.500px;background:#777"></div>
<div class="t xl" style="left:340.5px;top:440px">2.2e+3</div>
<div class="abs" style="left:378.6px;top:433.300px;width:.8px;height:3.500px;background:#777"></div>
<div class="t xl" style="left:379.0px;top:440px">2.4e+3</div>
<div class="abs" style="left:417.1px;top:433.300px;width:.8px;height:3.500px;background:#777"></div>
<div class="t xl" style="left:417.5px;top:440px">2.6e+3</div>
<div class="abs" style="left:455.6px;top:433.300px;width:.8px;height:3.500px;background:#777"></div>
<div class="t xl" style="left:456.0px;top:440px">2.8e+3</div>
<div class="abs" style="left:494.1px;top:433.300px;width:.8px;height:3.500px;background:#777"></div>
<div class="t xl" style="left:494.5px;top:440px">3e+3</div>
<div class="abs" style="left:532.6px;top:433.300px;width:.8px;height:3.500px;background:#777"></div>
<div class="t xl" style="left:533.0px;top:440px">3.2e+3</div>
<div class="abs" style="left:571.1px;top:433.300px;width:.8px;height:3.500px;background:#777"></div>
<div class="t xl" style="left:571.5px;top:440px">3.4e+3</div>
<div class="t" style="left:427px;top:449.500px;font-size:9.75px;font-weight:bold;color:#1e1e1e;transform:translateX(-50%);letter-spacing:-0.141px">Time-of-Flight [microseconds]</div>
<div class="t" style="left:238.8px;top:284px;font-size:9.6px;font-weight:bold;color:#1e1e1e;transform:translate(-50%,-50%) rotate(-90deg);letter-spacing:-.2px">Polar Angle [degrees]</div>
<!-- colorbar -->
<div class="abs" style="left:585px;top:134px;width:19.500px;height:312.500px;border:.6px solid #4a4a4a;background:linear-gradient(0deg,#440154 0%,#482475 10%,#414487 20%,#355f8d 30%,#2a788e 40%,#21908d 50%,#22a884 60%,#42be71 70%,#7ad151 80%,#bddf26 90%,#fde725 100%)"></div>
<div class="t xl" style="left:594.5px;top:121.5px;font-size:8.24px;letter-spacing:-0.126px">6.252e+3</div>
<div class="t xl" style="left:594.500px;top:452px;font-size:7.800px">0e+0</div>
<div class="abs" style="left:604.500px;top:146.2px;width:3.5px;height:.8px;background:#6a6a6a"></div>
<div class="t" style="left:611px;top:142.6px;font-size:7.6px;color:#333;letter-spacing:-0.125px">6e+3</div>
<div class="abs" style="left:604.500px;top:196.2px;width:3.5px;height:.8px;background:#6a6a6a"></div>
<div class="t" style="left:611px;top:192.6px;font-size:7.6px;color:#333;letter-spacing:-0.125px">5e+3</div>
<div class="abs" style="left:604.500px;top:246.2px;width:3.5px;height:.8px;background:#6a6a6a"></div>
<div class="t" style="left:611px;top:242.6px;font-size:7.6px;color:#333;letter-spacing:-0.125px">4e+3</div>
<div class="abs" style="left:604.500px;top:296.2px;width:3.5px;height:.8px;background:#6a6a6a"></div>
<div class="t" style="left:611px;top:292.6px;font-size:7.600px;color:#333;letter-spacing:-.1px">3e+3</div>
<div class="abs" style="left:604.500px;top:346.2px;width:3.5px;height:.8px;background:#6a6a6a"></div>
<div class="t" style="left:611px;top:342.6px;font-size:7.600px;color:#333;letter-spacing:-.1px">2e+3</div>
<div class="abs" style="left:604.500px;top:396.2px;width:3.5px;height:.8px;background:#6a6a6a"></div>
<div class="t" style="left:611px;top:392.6px;font-size:7.6px;color:#333;letter-spacing:-0.125px">1e+3</div>
<div class="abs" style="left:604.500px;top:445.9px;width:3.5px;height:.8px;background:#6a6a6a"></div>
<div class="t" style="left:611px;top:443px;font-size:7.6px;color:#333;letter-spacing:-.1px">0</div>

<!-- ===== right panel ===== -->
<div id="right" class="abs">
  <div class="t" style="left:11.1px;top:8px;font-size:9.74px;-webkit-text-stroke:.25px #2c3143;letter-spacing:-0.126px">History</div>
  <svg style="left:104.6px;top:9.3px" width="6" height="6" viewBox="0 0 6 6" stroke="#25537b" stroke-width="1.5" stroke-linecap="round"><path d="M3 .6v4.800M.6 3h4.800"/></svg>
  <svg style="left:121.7px;top:8.9px" width="7" height="6.600" viewBox="0 0 512 512" fill="#25537b"><path d="M0 168v-16c0-13.300 10.700-24 24-24h360V80c0-21.400 25.900-32 41-17l80 80c9.400 9.400 9.400 24.600 0 33.900l-80 80C410 272 384 261.500 384 240v-48H24c-13.300 0-24-10.700-24-24zm488 152H128v-48c0-21.300-25.900-32.100-41-17l-80 80c-9.400 9.400-9.400 24.600 0 33.900l80 80C102.100 464 128 453.400 128 432v-48h360c13.300 0 24-10.700 24-24v-16c0-13.300-10.700-24-24-24z"/></svg>
  <svg style="left:138.5px;top:10.5px" width="4" height="2.600" viewBox="0 0 5 3" fill="#25537b"><path d="M0 0h5L2.500 3z"/></svg>
  <div class="abs inp" style="left:8px;top:24.5px;width:113px;height:16.9px;border-radius:2px 0 0 2px"></div>
  <div class="t" style="left:13.5px;top:29.5px;font-size:7.83px;color:#4a5066;letter-spacing:-0.107px">search datasets</div>
  <div class="abs ibtn" style="left:120px;top:24.5px;width:14px;height:16.9px"></div>
  <div class="abs ibtn" style="left:133px;top:24.5px;width:14px;height:16.9px;border-radius:0 2px 2px 0"></div>
  <svg style="left:124.300px;top:30.300px" width="4.400" height="5.300" viewBox="0 0 5 6" fill="none" stroke="#2c3143" stroke-width="1.400" stroke-linecap="round" stroke-linejoin="round"><path d="M.7 .7l1.800 1.700L4.300 .7M.7 3.400l1.800 1.700 1.800-1.700"/></svg>
  <svg style="left:137.9px;top:30.7px" width="4.4" height="4.4" viewBox="0 0 5 5" stroke="#2c3143" stroke-width="1.4" stroke-linecap="round"><path d="M.7 .7l3.600 3.600M4.300 .7L.7 4.300"/></svg>
  <div class="t" style="left:8.9px;top:51.5px;font-size:11.45px;-webkit-text-stroke:.3px #2c3143;letter-spacing:-0.168px">Unnamed history</div>
  <svg style="left:135.500px;top:53.500px" width="7" height="7" viewBox="0 0 512 512" fill="#25537b"><path d="M497.900 142.100l-46.100 46.100c-4.700 4.700-12.300 4.700-17 0l-111-111c-4.700-4.700-4.700-12.300 0-17l46.100-46.100c18.700-18.700 49.100-18.700 67.900 0l60.100 60.100c18.800 18.700 18.800 49.100 0 67.900zM284.200 99.800L21.600 362.400.4 483.900c-2.900 16.400 11.400 30.600 27.800 27.800l121.500-21.300 262.600-262.600c4.700-4.700 4.700-12.300 0-17l-111-111c-4.800-4.700-12.400-4.700-17.100 0z"/></svg>
  <!-- size row -->
  <svg style="left:4px;top:79.500px" width="6.500" height="7.500" viewBox="0 0 448 512" fill="#25537b"><path d="M448 73.100v45.800C448 159.100 347.700 192 224 192S0 159.100 0 118.900V73.100C0 32.900 100.300 0 224 0s224 32.900 224 73.100zM448 176v102.900C448 319.100 347.700 352 224 352S0 319.100 0 278.900V176c48.100 33.100 136.200 48.600 224 48.600S399.900 209.100 448 176zm0 160v102.900C448 479.100 347.700 512 224 512S0 479.100 0 438.900V336c48.100 33.100 136.200 48.600 224 48.600S399.900 369.100 448 336z"/></svg>
  <div class="t" style="left:11.8px;top:80.4px;font-size:7.1px;color:#25537b;letter-spacing:-.2px;-webkit-text-stroke:.12px #25537b">19.4 MB</div>
  <svg style="left:124.500px;top:79.500px" width="5.500" height="7.500" viewBox="0 0 384 512" fill="#25537b"><path d="M172.300 501.700C27 291 0 269.400 0 192 0 86 86 0 192 0s192 86 192 192c0 77.400-27 99-172.300 309.700-9.500 13.800-29.900 13.800-39.400 0zM192 272c44.200 0 80-35.800 80-80s-35.800-80-80-80-80 35.800-80 80 35.800 80 80 80z"/></svg>
  <div class="t" style="left:132px;top:80.5px;font-size:7.2px;color:#25537b">2</div>
  <svg style="left:144px;top:79.500px" width="7.500" height="7.500" viewBox="0 0 512 512" fill="#25537b"><path d="M370.700 133.300C339.500 104 298.900 88 255.800 88c-77.500.1-144.300 53.200-162.800 126.900-1.300 5.400-6.100 9.100-11.700 9.100H24.100c-7.500 0-13.200-6.800-11.800-14.200C33.900 94.900 134.800 8 256 8c66.400 0 126.800 26.100 171.300 68.700L463 41C478.100 25.900 504 36.600 504 57.900V192c0 13.300-10.700 24-24 24H345.900c-21.400 0-32.100-25.900-17-41l41.800-41.700zM32 296h134.100c21.400 0 32.100 25.900 17 41l-41.800 41.800c31.300 29.300 71.800 45.300 114.900 45.300 77.400-.1 144.300-53.100 162.800-126.800 1.300-5.400 6.100-9.100 11.700-9.100h57.300c7.500 0 13.200 6.800 11.800 14.200C478.100 417.100 377.200 504 256 504c-66.400 0-126.800-26.100-171.300-68.700L49 471C33.900 486.100 8 475.400 8 454.100V320c0-13.300 10.700-24 24-24z"/></svg>
  <!-- select bar -->
  <div class="abs" style="left:0;top:93.500px;width:155px;height:15px;background:#e1e4eb"></div>
  <svg style="left:4.500px;top:97.500px" width="6.500" height="7" viewBox="0 0 448 512" fill="#25537b"><path d="M400 480H48c-26.500 0-48-21.500-48-48V80c0-26.500 21.500-48 48-48h352c26.500 0 48 21.500 48 48v352c0 26.500-21.500 48-48 48zm-204.700-98.100l184-184c6.200-6.200 6.200-16.400 0-22.600l-22.600-22.600c-6.200-6.200-16.400-6.200-22.600 0L184 302.700l-70.100-70.100c-6.200-6.200-16.400-6.200-22.600 0l-22.600 22.600c-6.200 6.200-6.200 16.400 0 22.600l104 104c6.200 6.300 16.400 6.300 22.600.1z"/></svg>
  <svg style="left:18.500px;top:97.500px" width="7" height="7" viewBox="0 0 7 7" fill="none" stroke="#b3b7c2" stroke-width="1"><path d="M.5 2.400h1.900V.5M6.500 2.400H4.600V.5M.5 4.600h1.900v1.900M6.500 4.600H4.600v1.900"/></svg>
  <svg style="left:144px;top:97.500px" width="7" height="7" viewBox="0 0 512 512" fill="#25537b"><path d="M487.400 315.700l-42.600-24.600c4.300-23.200 4.300-47 0-70.200l42.600-24.600c4.900-2.800 7.100-8.600 5.500-14-11.100-35.600-30-67.800-54.700-94.600-3.800-4.100-10-5.100-14.800-2.300L380.800 110c-17.900-15.400-38.500-27.300-60.800-35.100V25.800c0-5.600-3.900-10.500-9.400-11.700-36.700-8.200-74.300-7.800-109.200 0-5.500 1.200-9.400 6.100-9.400 11.700V75c-22.200 7.900-42.800 19.800-60.800 35.100L88.700 85.500c-4.900-2.800-11-1.900-14.800 2.300-24.700 26.700-43.600 58.900-54.700 94.600-1.700 5.400.6 11.200 5.500 14L67.300 221c-4.300 23.200-4.300 47 0 70.200l-42.600 24.600c-4.900 2.800-7.100 8.600-5.500 14 11.100 35.600 30 67.800 54.700 94.600 3.800 4.100 10 5.100 14.800 2.300l42.600-24.600c17.900 15.400 38.500 27.300 60.800 35.100v49.200c0 5.600 3.900 10.500 9.400 11.700 36.700 8.200 74.300 7.800 109.200 0 5.500-1.200 9.400-6.100 9.400-11.700v-49.200c22.200-7.900 42.800-19.800 60.800-35.100l42.600 24.600c4.900 2.800 11 1.900 14.800-2.300 24.700-26.700 43.600-58.900 54.700-94.600 1.500-5.500-.7-11.300-5.600-14.100zM256 336c-44.100 0-80-35.900-80-80s35.900-80 80-80 80 35.900 80 80-35.900 80-80 80z"/></svg>
  <!-- items -->
  <div class="abs" style="left:1.500px;top:111px;width:152px;height:19.500px;background:#c2ebc2;border-radius:2.500px"></div>
  <div class="t" style="left:6.5px;top:117px;font-size:7.73px;font-weight:bold;letter-spacing:-0.11px">2 : chopper.nxs</div>
  <div class="abs" style="left:1.500px;top:133.500px;width:152px;height:19.500px;background:#c2ebc2;border-radius:2.500px"></div>
  <div class="t" style="left:6.5px;top:139.500px;font-size:7.89px;font-weight:bold;letter-spacing:-0.119px">1 : ARCS_12954_histo.h5</div>
  <svg style="left:119px;top:116.9px" width="8" height="6.500" viewBox="0 0 576 512" fill="#25537b"><path d="M572.500 241.400C518.300 135.600 410.900 64 288 64S57.700 135.600 3.500 241.400a32.400 32.400 0 0 0 0 29.200C57.700 376.400 165.100 448 288 448s230.300-71.600 284.500-177.400a32.400 32.400 0 0 0 0-29.200zM288 400a144 144 0 1 1 144-144 143.900 143.900 0 0 1-144 144zm0-240a95.300 95.300 0 0 0-25.300 3.800 47.900 47.900 0 0 1-66.900 66.900A95.800 95.800 0 1 0 288 160z"/></svg>
<svg style="left:132px;top:116.6px" width="6.500" height="6.500" viewBox="0 0 512 512" fill="#25537b"><path d="M497.900 142.100l-46.100 46.100c-4.700 4.700-12.300 4.700-17 0l-111-111c-4.700-4.700-4.700-12.300 0-17l46.100-46.100c18.700-18.700 49.100-18.700 67.900 0l60.100 60.100c18.800 18.700 18.800 49.100 0 67.900zM284.200 99.800L21.600 362.400.4 483.900c-2.900 16.400 11.400 30.600 27.800 27.800l121.500-21.300 262.600-262.600c4.700-4.700 4.700-12.300 0-17l-111-111c-4.800-4.700-12.400-4.700-17.100 0z"/></svg>
<svg style="left:143.500px;top:116.6px" width="6" height="6.800" viewBox="0 0 448 512" fill="#25537b"><path d="M432 32H312l-9.400-18.700A24 24 0 0 0 281.100 0H166.800a23.700 23.700 0 0 0-21.400 13.300L136 32H16A16 16 0 0 0 0 48v32a16 16 0 0 0 16 16h416a16 16 0 0 0 16-16V48a16 16 0 0 0-16-16zM53.200 467a48 48 0 0 0 47.900 45h245.800a48 48 0 0 0 47.900-45L416 128H32z"/></svg>
<svg style="left:119px;top:139.4px" width="8" height="6.500" viewBox="0 0 576 512" fill="#25537b"><path d="M572.500 241.400C518.300 135.600 410.900 64 288 64S57.700 135.600 3.500 241.400a32.400 32.400 0 0 0 0 29.200C57.700 376.400 165.100 448 288 448s230.300-71.600 284.500-177.400a32.400 32.400 0 0 0 0-29.200zM288 400a144 144 0 1 1 144-144 143.900 143.900 0 0 1-144 144zm0-240a95.300 95.300 0 0 0-25.300 3.800 47.900 47.900 0 0 1-66.900 66.900A95.800 95.800 0 1 0 288 160z"/></svg>
<svg style="left:132px;top:139.1px" width="6.500" height="6.500" viewBox="0 0 512 512" fill="#25537b"><path d="M497.900 142.100l-46.100 46.100c-4.700 4.700-12.300 4.700-17 0l-111-111c-4.700-4.700-4.700-12.300 0-17l46.100-46.100c18.700-18.700 49.100-18.700 67.900 0l60.100 60.100c18.800 18.700 18.800 49.100 0 67.900zM284.200 99.800L21.600 362.400.4 483.900c-2.900 16.400 11.400 30.600 27.800 27.800l121.500-21.300 262.600-262.600c4.700-4.700 4.700-12.300 0-17l-111-111c-4.800-4.700-12.400-4.700-17.100 0z"/></svg>
<svg style="left:143.500px;top:139.1px" width="6" height="6.800" viewBox="0 0 448 512" fill="#25537b"><path d="M432 32H312l-9.400-18.700A24 24 0 0 0 281.100 0H166.800a23.700 23.700 0 0 0-21.400 13.300L136 32H16A16 16 0 0 0 0 48v32a16 16 0 0 0 16 16h416a16 16 0 0 0 16-16V48a16 16 0 0 0-16-16zM53.200 467a48 48 0 0 0 47.900 45h245.800a48 48 0 0 0 47.900-45L416 128H32z"/></svg>

  <div class="abs" style="left:2.5px;top:404.5px;width:4px;height:5.4px;background:#bcbec4"></div>
  <svg style="left:146.500px;top:404px" width="5" height="7" viewBox="0 0 5 7" fill="none" stroke="#2c3143" stroke-width="1.400" stroke-linecap="round" stroke-linejoin="round"><path d="M1 .8l3 2.700-3 2.700"/></svg>
</div>
<div class="abs" style="left:0;top:0;width:800px;height:466px;border-radius:5px;box-shadow:0 0 0 8px #c4c4c4, inset 1px 0 0 #d2d2d2, inset 0 -2px 2px -1px rgba(0,0,0,.10);pointer-events:none;z-index:50"></div>
</body>
</html>
